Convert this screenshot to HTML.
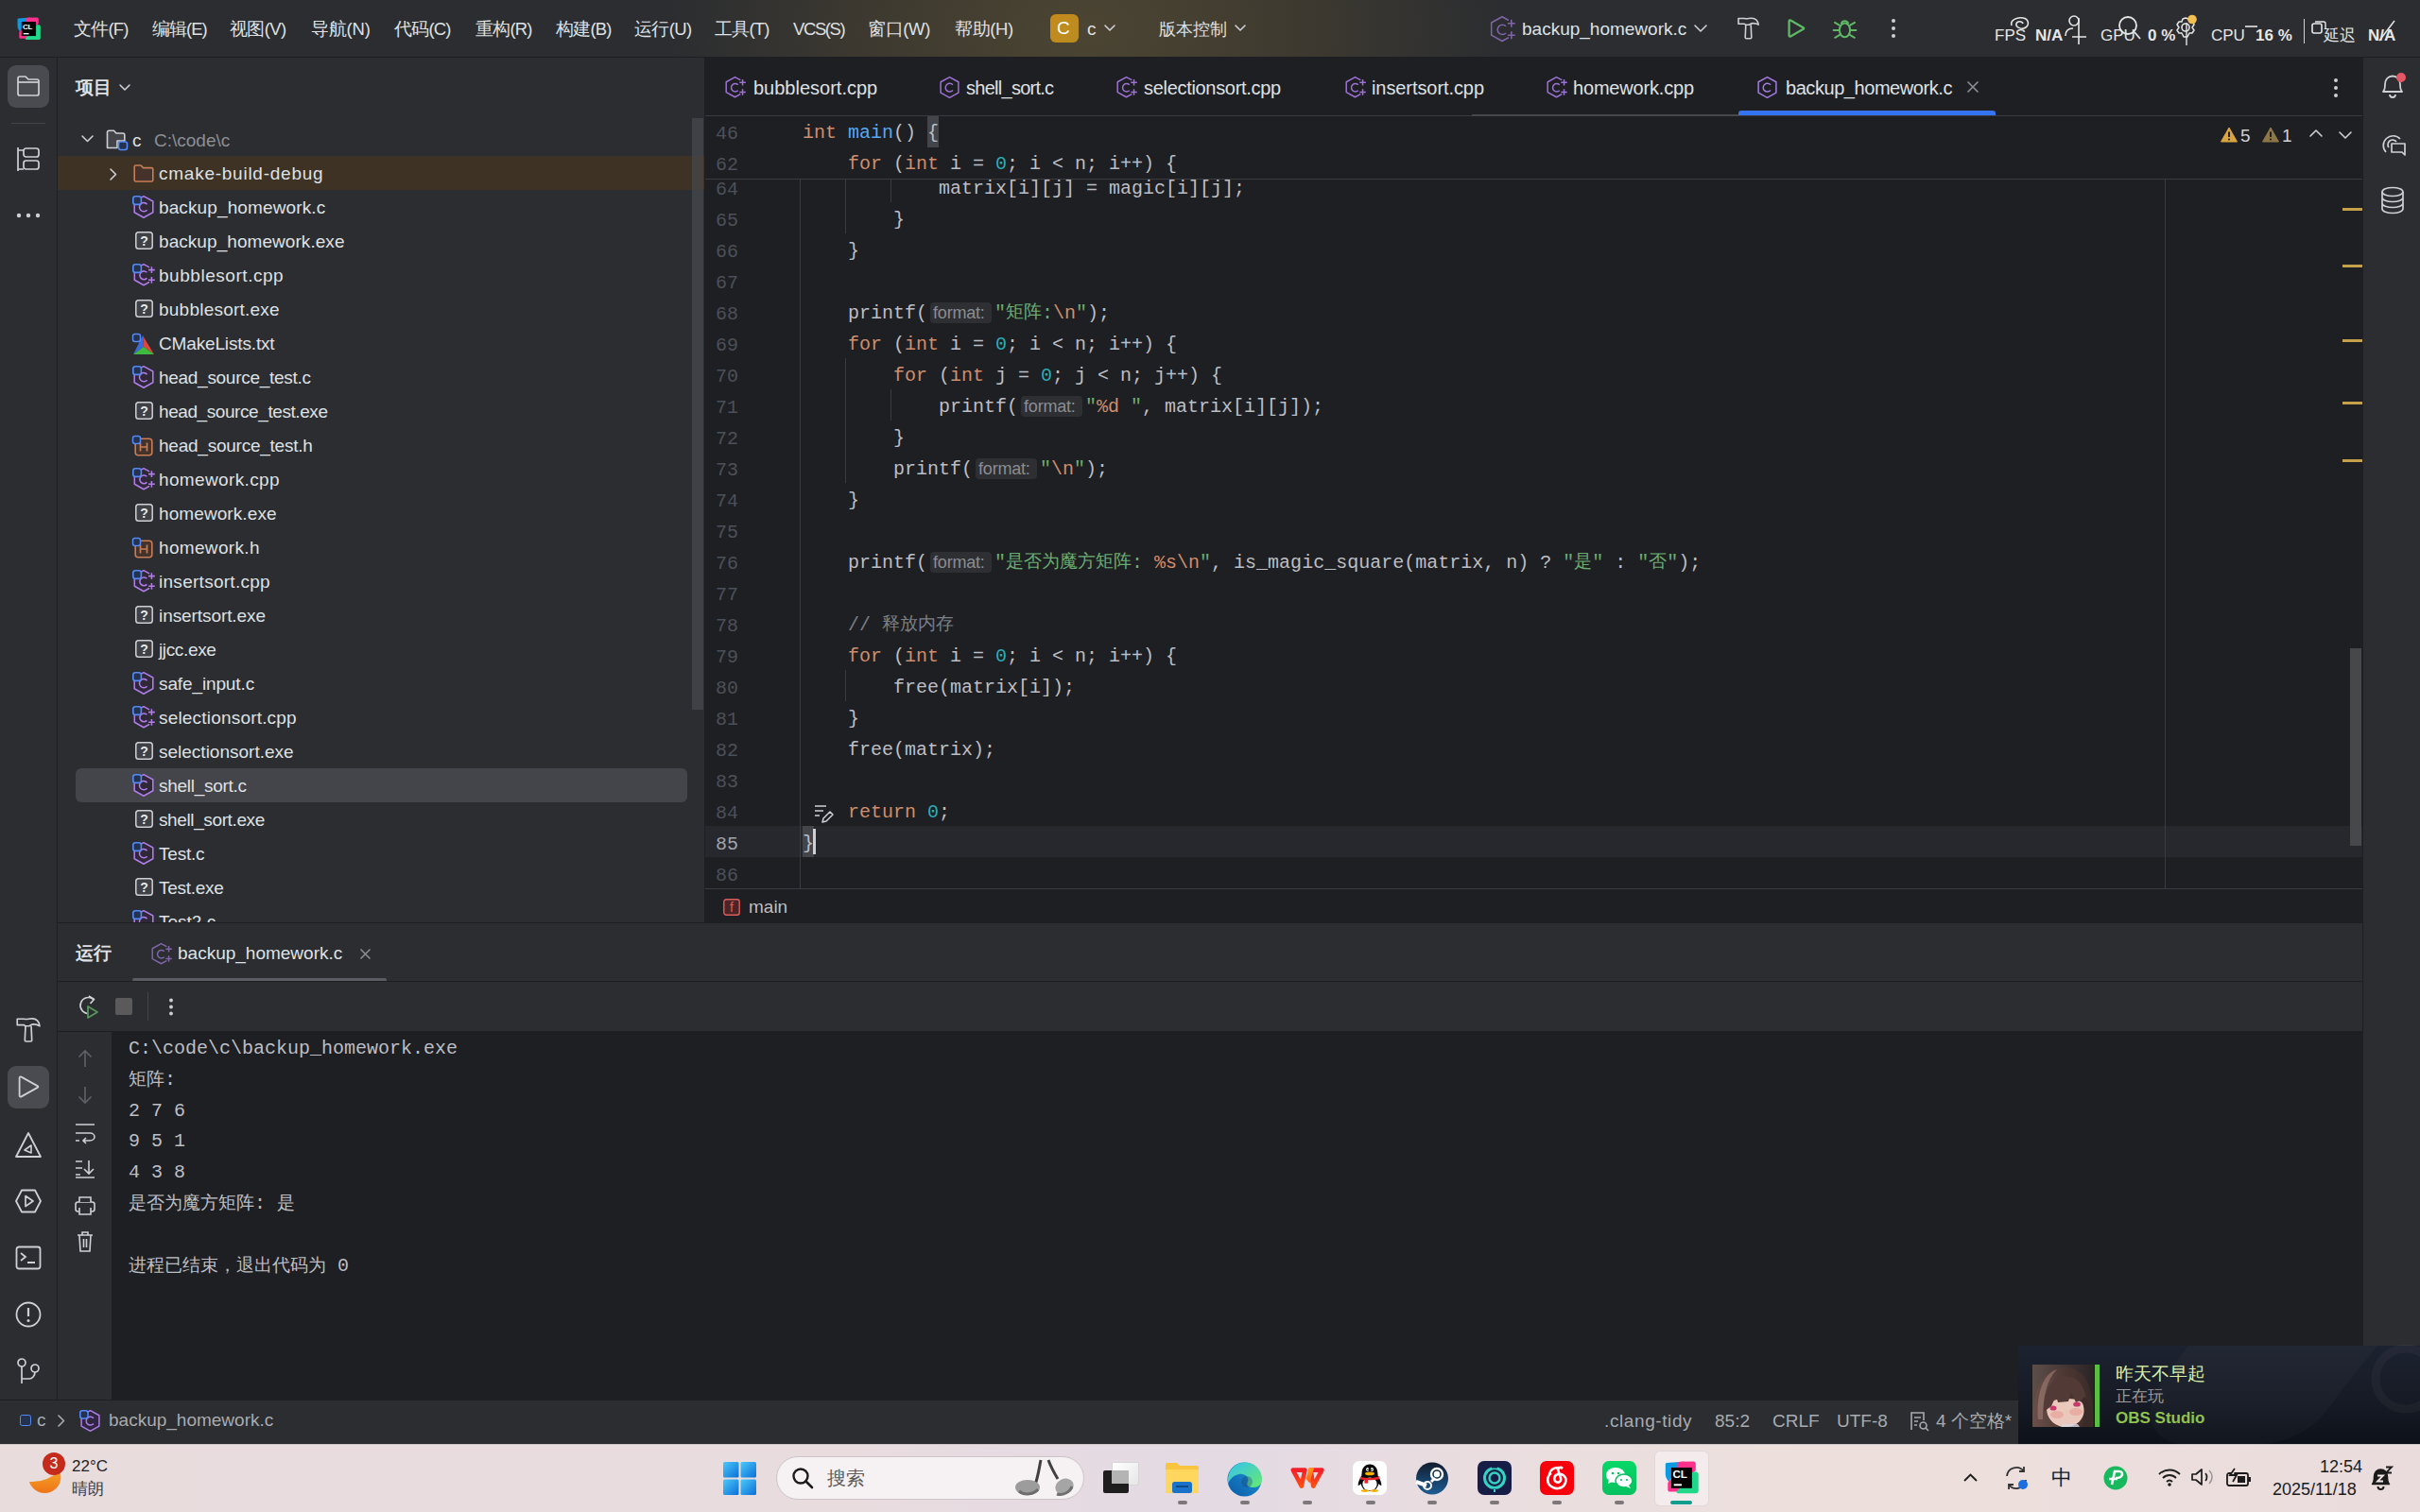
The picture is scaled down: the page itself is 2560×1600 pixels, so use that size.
<!DOCTYPE html><html><head><meta charset="utf-8"><style>
html,body{margin:0;padding:0;}
body{width:2560px;height:1600px;position:relative;overflow:hidden;background:#2B2D30;font-family:"Liberation Sans",sans-serif;}
.t{position:absolute;white-space:pre;height:40px;line-height:40px;}
svg{overflow:visible}
</style></head><body>
<div style="position:absolute;left:0px;top:0px;width:2560px;height:60px;background:radial-gradient(ellipse 440px 300px at 1150px 30px, #4C4533 0%, #403B30 45%, rgba(43,45,48,0) 100%),#2B2D30;"></div>
<div style="position:absolute;left:0px;top:60px;width:2560px;height:1px;background:#1E1F22;"></div>
<svg style="position:absolute;left:17.5px;top:17.5px;" width="25" height="24.5" viewBox="-2 0 36 35" fill="none"><defs><linearGradient id="clb17" x1="0" y1="0" x2="1" y2="0"><stop offset=".55" stop-color="#0A9AE3"/><stop offset=".75" stop-color="#FF318C"/></linearGradient></defs><path d="M-1.2 3.4 C-1.2 2.6 -0.6 2.2 0.2 2.1 L19 0.6 L2.2 21.8 C0.5 19.5 -1.2 17 -1.2 14 Z" fill="url(#clb17)"/><path d="M14 0.8 L28.2 0.6 C29.8 0.6 30.8 1.6 30.8 3.2 V9.7 L27.4 13.5 L10 10 Z" fill="#FF318C"/><path d="M27.8 11.6 H31.2 C32.6 11.6 33.7 12.8 33.7 14.2 V31.8 C33.7 33.2 32.6 34.3 31.2 34.3 H12.4 C11 34.3 10.2 33.2 10.6 32 L14 27 Z" fill="#21D789"/><path d="M2.2 21.6 L8 16 L14 28.8 L10.4 32.6 H3.6 C2.2 32.6 1.3 31.7 1.3 30.3 V23.5 Z" fill="#FF318C"/><rect x="4.9" y="7" width="22" height="21.8" fill="#000"/><text x="6.6" y="18.3" font-family="Liberation Sans" font-weight="700" font-size="11.6" fill="#fff" letter-spacing="-0.3">CL</text><rect x="7.7" y="24.3" width="8.3" height="2" fill="#fff"/></svg>
<div class="t" style="left:78px;top:11px;font-family:&quot;Liberation Sans&quot;, sans-serif;font-size:18.5px;color:#DFE1E5;font-weight:400;letter-spacing:-0.8px;">文件(F)</div>
<div class="t" style="left:161px;top:11px;font-family:&quot;Liberation Sans&quot;, sans-serif;font-size:18.5px;color:#DFE1E5;font-weight:400;letter-spacing:-1.0px;">编辑(E)</div>
<div class="t" style="left:243px;top:11px;font-family:&quot;Liberation Sans&quot;, sans-serif;font-size:18.5px;color:#DFE1E5;font-weight:400;letter-spacing:-0.6px;">视图(V)</div>
<div class="t" style="left:329px;top:11px;font-family:&quot;Liberation Sans&quot;, sans-serif;font-size:18.5px;color:#DFE1E5;font-weight:400;letter-spacing:-0.2px;">导航(N)</div>
<div class="t" style="left:417px;top:11px;font-family:&quot;Liberation Sans&quot;, sans-serif;font-size:18.5px;color:#DFE1E5;font-weight:400;letter-spacing:-0.8px;">代码(C)</div>
<div class="t" style="left:503px;top:11px;font-family:&quot;Liberation Sans&quot;, sans-serif;font-size:18.5px;color:#DFE1E5;font-weight:400;letter-spacing:-0.8px;">重构(R)</div>
<div class="t" style="left:588px;top:11px;font-family:&quot;Liberation Sans&quot;, sans-serif;font-size:18.5px;color:#DFE1E5;font-weight:400;letter-spacing:-0.8px;">构建(B)</div>
<div class="t" style="left:671px;top:11px;font-family:&quot;Liberation Sans&quot;, sans-serif;font-size:18.5px;color:#DFE1E5;font-weight:400;letter-spacing:-0.6px;">运行(U)</div>
<div class="t" style="left:756px;top:11px;font-family:&quot;Liberation Sans&quot;, sans-serif;font-size:18.5px;color:#DFE1E5;font-weight:400;letter-spacing:-0.8px;">工具(T)</div>
<div class="t" style="left:839px;top:11px;font-family:&quot;Liberation Sans&quot;, sans-serif;font-size:18.5px;color:#DFE1E5;font-weight:400;letter-spacing:-1.4px;">VCS(S)</div>
<div class="t" style="left:918px;top:11px;font-family:&quot;Liberation Sans&quot;, sans-serif;font-size:18.5px;color:#DFE1E5;font-weight:400;letter-spacing:-0.35px;">窗口(W)</div>
<div class="t" style="left:1010px;top:11px;font-family:&quot;Liberation Sans&quot;, sans-serif;font-size:18.5px;color:#DFE1E5;font-weight:400;letter-spacing:-0.4px;">帮助(H)</div>
<div style="position:absolute;left:1111px;top:15px;width:30px;height:30px;background:linear-gradient(135deg,#C58A1A,#B98C22);border-radius:6px;"></div>
<div class="t" style="left:1118px;top:10px;font-family:&quot;Liberation Sans&quot;, sans-serif;font-size:19px;color:#FFFFFF;font-weight:400;">C</div>
<div class="t" style="left:1150px;top:11px;font-family:&quot;Liberation Sans&quot;, sans-serif;font-size:19px;color:#DFE1E5;font-weight:400;">c</div>
<svg style="position:absolute;left:1168px;top:26px;" width="12" height="8" viewBox="0 0 12 8" fill="none"><path d="M1 1 L6.0 6.0 L11 1" stroke="#CED0D6" stroke-width="1.6" stroke-linecap="round" stroke-linejoin="round"/></svg>
<div class="t" style="left:1226px;top:11px;font-family:&quot;Liberation Sans&quot;, sans-serif;font-size:18px;color:#DFE1E5;font-weight:400;">版本控制</div>
<svg style="position:absolute;left:1306px;top:26px;" width="12" height="8" viewBox="0 0 12 8" fill="none"><path d="M1 1 L6.0 6.0 L11 1" stroke="#CED0D6" stroke-width="1.6" stroke-linecap="round" stroke-linejoin="round"/></svg>
<svg style="position:absolute;left:1575px;top:17px;" width="28" height="28" viewBox="0 0 24 24" fill="none"><path d="M17.5 3.6 L12 0.6 L2.3 6 L2.3 17.3 L12 22.7 L17.5 19.7 Z" fill="none" stroke="none"/><path d="M17.5 3.6 L12 0.6 L2.3 6 L2.3 17.3 L12 22.7 L17.5 19.7" stroke="#7F65A8" stroke-width="1.3285714285714287" fill="none" stroke-linejoin="round" stroke-linecap="round"/><path d="M15.4 9.2 A4.4 4.4 0 1 0 15.4 15.4" stroke="#7F65A8" stroke-width="1.3285714285714287"/><path d="M20.4 3.2 V10 M17 6.6 H23.8 M20.4 13.9 V20.7 M17 17.3 H23.8" stroke="#7F65A8" stroke-width="1.3285714285714287"/></svg>
<div class="t" style="left:1610px;top:11px;font-family:&quot;Liberation Sans&quot;, sans-serif;font-size:19px;color:#DFE1E5;font-weight:400;">backup_homework.c</div>
<svg style="position:absolute;left:1792px;top:26px;" width="14" height="9" viewBox="0 0 14 9" fill="none"><path d="M1 1 L7.0 7.0 L13 1" stroke="#CED0D6" stroke-width="1.6" stroke-linecap="round" stroke-linejoin="round"/></svg>
<svg style="position:absolute;left:1837px;top:18px;" width="25" height="24" viewBox="0 0 25 24" fill="none"><path d="M2 1.5 H8.5 C11 2.2 13 1.2 16 1.2 C20 1.2 22.6 4 23.2 8.2 C21.5 7 19.5 6.6 17.5 6.6 C15.5 6.6 14.5 7.6 13.4 8.2 H9.6 C9 7.6 8.6 7.2 8 7.2 H2 Z" stroke="#CED0D6" stroke-width="1.6" stroke-linejoin="round"/><path d="M9.8 8.2 L9.2 21.6 C9.2 22.3 9.6 22.7 10.3 22.7 H14.7 C15.4 22.7 15.8 22.3 15.8 21.6 L15.2 8.2" stroke="#CED0D6" stroke-width="1.6" stroke-linejoin="round"/></svg>
<svg style="position:absolute;left:1889px;top:18px;" width="24" height="24" viewBox="0 0 24 24" fill="none"><path d="M5.2 3.6 C4.4 3.1 3.6 3.6 3.6 4.5 V19.5 C3.6 20.4 4.4 20.9 5.2 20.4 L18.6 12.8 C19.4 12.3 19.4 11.7 18.6 11.2 Z" stroke="#5FB865" stroke-width="2.3" stroke-linejoin="round"/></svg>
<svg style="position:absolute;left:1937px;top:17px;" width="26" height="26" viewBox="0 0 26 26" fill="none"><ellipse cx="14.5" cy="14.8" rx="5.6" ry="7.4" stroke="#5FB865" stroke-width="2"/><path d="M10.8 8.2 A3.8 3.8 0 0 1 18.2 8.2" stroke="#5FB865" stroke-width="2"/><path d="M8.8 9.6 L4 6.8 M8.8 15 H2.6 M9.2 19.8 L4.2 22.8 M20.2 9.6 L25 6.8 M20.2 15 H26.4 M19.8 19.8 L24.8 22.8" stroke="#5FB865" stroke-width="2" stroke-linecap="round"/></svg>
<svg style="position:absolute;left:1998px;top:19px;" width="10" height="24" viewBox="0 0 10 24" fill="none"><circle cx="5" cy="3" r="2" fill="#CED0D6"/><circle cx="5" cy="11" r="2" fill="#CED0D6"/><circle cx="5" cy="19" r="2" fill="#CED0D6"/></svg>
<div class="t" style="left:2110px;top:18px;font-family:&quot;Liberation Sans&quot;, sans-serif;font-size:17px;color:#E6E6E6;font-weight:400;">FPS</div>
<svg style="position:absolute;left:2124px;top:17px;" width="24" height="22" viewBox="0 0 24 22" fill="none"><path d="M4 10 C2 4 10 1 16 2 C22 3 23 9 19 12 C15 15 8 12 9 8 C10 5 15 5 16 8" stroke="#E6E6E6" stroke-width="1.6"/></svg>
<div class="t" style="left:2153px;top:18px;font-family:&quot;Liberation Sans&quot;, sans-serif;font-size:17px;color:#E6E6E6;font-weight:700;">N/A</div>
<svg style="position:absolute;left:2183px;top:16px;" width="26" height="32" viewBox="0 0 26 32" fill="none"><circle cx="11" cy="6" r="5" stroke="#E6E6E6" stroke-width="1.6"/><path d="M2 22 C2 16 6 14 10 14" stroke="#E6E6E6" stroke-width="1.6"/><path d="M16 3 V31 M9 23 H24" stroke="#E6E6E6" stroke-width="1.6"/></svg>
<div class="t" style="left:2222px;top:18px;font-family:&quot;Liberation Sans&quot;, sans-serif;font-size:17px;color:#E6E6E6;font-weight:400;">GPU</div>
<svg style="position:absolute;left:2240px;top:17px;" width="26" height="28" viewBox="0 0 26 28" fill="none"><circle cx="11" cy="10" r="9" stroke="#E6E6E6" stroke-width="1.8"/><path d="M18 17 L24 24" stroke="#E6E6E6" stroke-width="1.8"/></svg>
<div class="t" style="left:2272px;top:18px;font-family:&quot;Liberation Sans&quot;, sans-serif;font-size:17px;color:#E6E6E6;font-weight:700;">0 %</div>
<svg style="position:absolute;left:2300px;top:16px;" width="26" height="32" viewBox="0 0 26 32" fill="none"><circle cx="12" cy="13" r="4" stroke="#E6E6E6" stroke-width="1.6"/><path d="M12 3 L15 4 L16 7 L20 7 L21 10 L19 13 L21 16 L19 19 L16 19 L14 23 L10 23 L8 19 L5 19 L3 16 L5 13 L3 10 L5 7 L8 7 L9 4 Z" stroke="#E6E6E6" stroke-width="1.5" stroke-linejoin="round"/><path d="M13 8 V32" stroke="#E6E6E6" stroke-width="1.4"/><circle cx="19" cy="4.5" r="4.8" fill="#F3C04F"/></svg>
<div class="t" style="left:2339px;top:18px;font-family:&quot;Liberation Sans&quot;, sans-serif;font-size:17px;color:#E6E6E6;font-weight:400;">CPU</div>
<svg style="position:absolute;left:2374px;top:27px;" width="16" height="4" viewBox="0 0 16 4" fill="none"><path d="M1 1 H14" stroke="#E6E6E6" stroke-width="1.6"/></svg>
<div class="t" style="left:2386px;top:18px;font-family:&quot;Liberation Sans&quot;, sans-serif;font-size:17px;color:#E6E6E6;font-weight:700;">16 %</div>
<div style="position:absolute;left:2437px;top:20px;width:1px;height:26px;background:#D0D0D0;"></div>
<svg style="position:absolute;left:2445px;top:22px;" width="17" height="16" viewBox="0 0 17 16" fill="none"><rect x="1" y="3" width="10" height="10" rx="2" stroke="#E6E6E6" stroke-width="1.6"/><path d="M4 1 H13 C14 1 15 2 15 3 V9" stroke="#E6E6E6" stroke-width="1.4"/></svg>
<div class="t" style="left:2458px;top:18px;font-family:&quot;Liberation Sans&quot;, sans-serif;font-size:17px;color:#E6E6E6;font-weight:400;">延迟</div>
<div class="t" style="left:2505px;top:18px;font-family:&quot;Liberation Sans&quot;, sans-serif;font-size:17px;color:#E6E6E6;font-weight:700;">N/A</div>
<svg style="position:absolute;left:2516px;top:21px;" width="18" height="24" viewBox="0 0 18 24" fill="none"><path d="M1 22 L17 1" stroke="#E6E6E6" stroke-width="1.5"/></svg>
<div style="position:absolute;left:0px;top:61px;width:60px;height:1420px;background:#2B2D30;"></div>
<div style="position:absolute;left:60px;top:61px;width:1px;height:1420px;background:#1E1F22;"></div>
<div style="position:absolute;left:8px;top:69px;width:44px;height:45px;background:#494B50;border-radius:9px;"></div>
<svg style="position:absolute;left:17px;top:79px;" width="26" height="24" viewBox="0 0 26 24" fill="none"><path d="M2 4 C2 3 3 2 4 2 H10 L13 5 H22 C23 5 24 6 24 7 V20 C24 21 23 22 22 22 H4 C3 22 2 21 2 20 Z" stroke="#CED0D6" stroke-width="1.7" stroke-linejoin="round"/><path d="M2 8 H24" stroke="#CED0D6" stroke-width="1.7"/></svg>
<div style="position:absolute;left:12px;top:130px;width:36px;height:1px;background:#43454A;"></div>
<svg style="position:absolute;left:17px;top:154px;" width="26" height="29" viewBox="0 0 26 29" fill="none"><path d="M2 2 V27 M2 5 H8 M2 25 H8" stroke="#CED0D6" stroke-width="1.7"/><rect x="8" y="3" width="16" height="9" rx="2.5" stroke="#CED0D6" stroke-width="1.7"/><rect x="8" y="16" width="16" height="9" rx="2.5" stroke="#CED0D6" stroke-width="1.7"/></svg>
<svg style="position:absolute;left:17px;top:224px;" width="26" height="8" viewBox="0 0 26 8" fill="none"><circle cx="3" cy="4" r="2.2" fill="#CED0D6"/><circle cx="13" cy="4" r="2.2" fill="#CED0D6"/><circle cx="23" cy="4" r="2.2" fill="#CED0D6"/></svg>
<svg style="position:absolute;left:16px;top:1076px;" width="28" height="28" viewBox="0 0 25 24" fill="none"><path d="M2 1.5 H8.5 C11 2.2 13 1.2 16 1.2 C20 1.2 22.6 4 23.2 8.2 C21.5 7 19.5 6.6 17.5 6.6 C15.5 6.6 14.5 7.6 13.4 8.2 H9.6 C9 7.6 8.6 7.2 8 7.2 H2 Z" stroke="#CED0D6" stroke-width="1.5" stroke-linejoin="round"/><path d="M9.8 8.2 L9.2 21.6 C9.2 22.3 9.6 22.7 10.3 22.7 H14.7 C15.4 22.7 15.8 22.3 15.8 21.6 L15.2 8.2" stroke="#CED0D6" stroke-width="1.5" stroke-linejoin="round"/></svg>
<div style="position:absolute;left:8px;top:1128px;width:44px;height:45px;background:#494B50;border-radius:9px;"></div>
<svg style="position:absolute;left:18px;top:1137px;" width="24" height="26" viewBox="0 0 24 26" fill="none"><path d="M4.6 2.6 C3.6 2 2.6 2.6 2.6 3.8 V22.2 C2.6 23.4 3.6 24 4.6 23.4 L21.6 13.9 C22.6 13.3 22.6 12.7 21.6 12.1 Z" stroke="#CED0D6" stroke-width="1.8" stroke-linejoin="round"/></svg>
<svg style="position:absolute;left:16px;top:1197px;" width="28" height="29" viewBox="0 0 28 29" fill="none"><path d="M14 2 L27 27 H1 Z" stroke="#CED0D6" stroke-width="1.8" stroke-linejoin="round"/><path d="M17 15 L10 20 L17 23 Z" stroke="#CED0D6" stroke-width="1.6" stroke-linejoin="round"/></svg>
<svg style="position:absolute;left:16px;top:1258px;" width="28" height="26" viewBox="0 0 28 26" fill="none"><path d="M7 1.5 H21 L27 13 L21 24.5 H7 L1 13 Z" stroke="#CED0D6" stroke-width="1.8" stroke-linejoin="round"/><path d="M11 7.5 L19 13 L11 18.5 Z" stroke="#CED0D6" stroke-width="1.7" stroke-linejoin="round"/></svg>
<svg style="position:absolute;left:16px;top:1318px;" width="28" height="26" viewBox="0 0 28 26" fill="none"><rect x="1.5" y="1.5" width="25" height="23" rx="2.5" stroke="#CED0D6" stroke-width="1.8"/><path d="M6 8 L11 12 L6 16 M13 18 H21" stroke="#CED0D6" stroke-width="1.8"/></svg>
<svg style="position:absolute;left:16px;top:1377px;" width="28" height="28" viewBox="0 0 28 28" fill="none"><circle cx="14" cy="14" r="12.5" stroke="#CED0D6" stroke-width="1.8"/><path d="M14 7 V16" stroke="#CED0D6" stroke-width="2.2"/><circle cx="14" cy="20.5" r="1.5" fill="#CED0D6"/></svg>
<svg style="position:absolute;left:17px;top:1437px;" width="26" height="28" viewBox="0 0 26 28" fill="none"><circle cx="6" cy="5" r="4" stroke="#CED0D6" stroke-width="1.7"/><circle cx="20" cy="11" r="4" stroke="#CED0D6" stroke-width="1.7"/><path d="M6 9 V27 M6 22 H14 C17 22 20 19 20 15" stroke="#CED0D6" stroke-width="1.7"/></svg>
<div style="position:absolute;left:61px;top:61px;width:684px;height:915px;background:#2B2D30;"></div>
<div class="t" style="left:80px;top:73px;font-family:&quot;Liberation Sans&quot;, sans-serif;font-size:19px;color:#DFE1E5;font-weight:700;">项目</div>
<svg style="position:absolute;left:126px;top:89px;" width="12" height="8" viewBox="0 0 12 8" fill="none"><path d="M1 1 L6.0 6.0 L11 1" stroke="#CED0D6" stroke-width="1.6" stroke-linecap="round" stroke-linejoin="round"/></svg>
<div style="position:absolute;left:61px;top:61px;width:684px;height:915px;overflow:hidden;">
<svg style="position:absolute;left:25px;top:82px;" width="13" height="8" viewBox="0 0 13 8" fill="none"><path d="M1 1 L6.5 6.5 L12 1" stroke="#CED0D6" stroke-width="1.6" stroke-linecap="round" stroke-linejoin="round"/></svg>
<svg style="position:absolute;left:51px;top:76px;" width="24" height="22" viewBox="0 0 24 22" fill="none"><path d="M1.5 3 C1.5 2 2.3 1.3 3.2 1.3 H8.5 L11 4 H18 C19 4 19.8 4.8 19.8 5.8 V12 H12 V19.5 H1.5 Z" fill="#43454A" stroke="#CED0D6" stroke-width="1.6" stroke-linejoin="round"/><rect x="13.5" y="13" width="9" height="8.5" rx="2.2" fill="#25324D" stroke="#548AF7" stroke-width="1.6"/></svg>
<div class="t" style="left:79px;top:68px;font-family:&quot;Liberation Sans&quot;, sans-serif;font-size:19px;color:#DFE1E5;font-weight:400;">c</div>
<div class="t" style="left:102px;top:68px;font-family:&quot;Liberation Sans&quot;, sans-serif;font-size:19px;color:#8C8F94;font-weight:400;">C:\code\c</div>
<div style="position:absolute;left:0px;top:104px;width:684px;height:36px;background:#3D3223;"></div>
<svg style="position:absolute;left:55px;top:117px;" width="8" height="13" viewBox="0 0 8 13" fill="none"><path d="M1 1 L6.5 6.5 L1 12" stroke="#CED0D6" stroke-width="1.6" stroke-linecap="round" stroke-linejoin="round"/></svg>
<svg style="position:absolute;left:80px;top:113px;" width="22" height="19" viewBox="0 0 22 19" fill="none"><path d="M1.2 2.5 C1.2 1.7 1.9 1 2.7 1 H8 L10.5 3.6 H19.3 C20.1 3.6 20.8 4.3 20.8 5.1 V16.5 C20.8 17.3 20.1 18 19.3 18 H2.7 C1.9 18 1.2 17.3 1.2 16.5 Z" fill="#45322A" stroke="#C77D55" stroke-width="1.6" stroke-linejoin="round"/></svg>
<div class="t" style="left:107px;top:103px;font-family:&quot;Liberation Sans&quot;, sans-serif;font-size:19px;color:#DFE1E5;font-weight:400;letter-spacing:0.75px;">cmake-build-debug</div>
<svg style="position:absolute;left:79px;top:146px;" width="24" height="24" viewBox="0 0 24 24" fill="none"><path d="M12 0.6 L21.8 6 L21.8 17.8 L12 23.3 L2.2 17.8 L2.2 6 Z" stroke="#B07CE8" stroke-width="1.55" fill="#2E2838" stroke-linejoin="round"/><path d="M15.6 9.2 A4.6 4.6 0 1 0 15.6 15.2" stroke="#B07CE8" stroke-width="1.55"/><rect x="0.8" y="0.8" width="8.6" height="8.6" rx="2.5" fill="#25324D" stroke="#548AF7" stroke-width="1.6"/></svg>
<div class="t" style="left:107px;top:139px;font-family:&quot;Liberation Sans&quot;, sans-serif;font-size:19px;color:#DFE1E5;font-weight:400;letter-spacing:0.12px;">backup_homework.c</div>
<svg style="position:absolute;left:82px;top:184px;" width="19" height="19" viewBox="0 0 19 19" fill="none"><rect x="0.8" y="0.8" width="17.4" height="17.4" rx="2.8" fill="#3F4145" stroke="#CED0D6" stroke-width="1.5"/><text x="9.5" y="14.6" text-anchor="middle" font-family="Liberation Sans" font-weight="700" font-size="14" fill="#E6E7EA">?</text></svg>
<div class="t" style="left:107px;top:175px;font-family:&quot;Liberation Sans&quot;, sans-serif;font-size:19px;color:#DFE1E5;font-weight:400;letter-spacing:0.06px;">backup_homework.exe</div>
<svg style="position:absolute;left:79px;top:218px;" width="24" height="24" viewBox="0 0 24 24" fill="none"><path d="M17.5 3.6 L12 0.6 L2.3 6 L2.3 17.3 L12 22.7 L17.5 19.7 Z" fill="#2E2838" stroke="none"/><path d="M17.5 3.6 L12 0.6 L2.3 6 L2.3 17.3 L12 22.7 L17.5 19.7" stroke="#B07CE8" stroke-width="1.55" fill="none" stroke-linejoin="round" stroke-linecap="round"/><path d="M15.4 9.2 A4.4 4.4 0 1 0 15.4 15.4" stroke="#B07CE8" stroke-width="1.55"/><path d="M20.4 3.2 V10 M17 6.6 H23.8 M20.4 13.9 V20.7 M17 17.3 H23.8" stroke="#B07CE8" stroke-width="1.55"/><rect x="0.8" y="0.8" width="8.6" height="8.6" rx="2.5" fill="#25324D" stroke="#548AF7" stroke-width="1.6"/></svg>
<div class="t" style="left:107px;top:211px;font-family:&quot;Liberation Sans&quot;, sans-serif;font-size:19px;color:#DFE1E5;font-weight:400;letter-spacing:0.54px;">bubblesort.cpp</div>
<svg style="position:absolute;left:82px;top:256px;" width="19" height="19" viewBox="0 0 19 19" fill="none"><rect x="0.8" y="0.8" width="17.4" height="17.4" rx="2.8" fill="#3F4145" stroke="#CED0D6" stroke-width="1.5"/><text x="9.5" y="14.6" text-anchor="middle" font-family="Liberation Sans" font-weight="700" font-size="14" fill="#E6E7EA">?</text></svg>
<div class="t" style="left:107px;top:247px;font-family:&quot;Liberation Sans&quot;, sans-serif;font-size:19px;color:#DFE1E5;font-weight:400;letter-spacing:0.23px;">bubblesort.exe</div>
<svg style="position:absolute;left:79px;top:292px;" width="24" height="24" viewBox="0 0 24 24" fill="none"><path d="M11 2 L1 22 L12 14 Z" fill="#3B6BD9"/><path d="M11 2 L23 22 L12 14 Z" fill="#E0443A"/><path d="M1 22 H23 L12 14 Z" fill="#3FB93F"/><rect x="0.5" y="0.5" width="8" height="8" rx="2.2" fill="#25324D" stroke="#548AF7" stroke-width="1.5"/></svg>
<div class="t" style="left:107px;top:283px;font-family:&quot;Liberation Sans&quot;, sans-serif;font-size:19px;color:#DFE1E5;font-weight:400;letter-spacing:-0.15px;">CMakeLists.txt</div>
<svg style="position:absolute;left:79px;top:326px;" width="24" height="24" viewBox="0 0 24 24" fill="none"><path d="M12 0.6 L21.8 6 L21.8 17.8 L12 23.3 L2.2 17.8 L2.2 6 Z" stroke="#B07CE8" stroke-width="1.55" fill="#2E2838" stroke-linejoin="round"/><path d="M15.6 9.2 A4.6 4.6 0 1 0 15.6 15.2" stroke="#B07CE8" stroke-width="1.55"/><rect x="0.8" y="0.8" width="8.6" height="8.6" rx="2.5" fill="#25324D" stroke="#548AF7" stroke-width="1.6"/></svg>
<div class="t" style="left:107px;top:319px;font-family:&quot;Liberation Sans&quot;, sans-serif;font-size:19px;color:#DFE1E5;font-weight:400;letter-spacing:-0.29px;">head_source_test.c</div>
<svg style="position:absolute;left:82px;top:364px;" width="19" height="19" viewBox="0 0 19 19" fill="none"><rect x="0.8" y="0.8" width="17.4" height="17.4" rx="2.8" fill="#3F4145" stroke="#CED0D6" stroke-width="1.5"/><text x="9.5" y="14.6" text-anchor="middle" font-family="Liberation Sans" font-weight="700" font-size="14" fill="#E6E7EA">?</text></svg>
<div class="t" style="left:107px;top:355px;font-family:&quot;Liberation Sans&quot;, sans-serif;font-size:19px;color:#DFE1E5;font-weight:400;letter-spacing:-0.42px;">head_source_test.exe</div>
<svg style="position:absolute;left:79px;top:400px;" width="22" height="22" viewBox="0 0 22 22" fill="none"><rect x="3.2" y="3.2" width="17.6" height="17.6" rx="3" fill="#45322A" stroke="#C77D55" stroke-width="1.6"/><path d="M8.5 7.5 V16.5 M15.5 7.5 V16.5 M8.5 12 H15.5" stroke="#C77D55" stroke-width="1.7"/><rect x="0.5" y="0.5" width="8" height="8" rx="2.2" fill="#25324D" stroke="#548AF7" stroke-width="1.5"/></svg>
<div class="t" style="left:107px;top:391px;font-family:&quot;Liberation Sans&quot;, sans-serif;font-size:19px;color:#DFE1E5;font-weight:400;letter-spacing:-0.24px;">head_source_test.h</div>
<svg style="position:absolute;left:79px;top:434px;" width="24" height="24" viewBox="0 0 24 24" fill="none"><path d="M17.5 3.6 L12 0.6 L2.3 6 L2.3 17.3 L12 22.7 L17.5 19.7 Z" fill="#2E2838" stroke="none"/><path d="M17.5 3.6 L12 0.6 L2.3 6 L2.3 17.3 L12 22.7 L17.5 19.7" stroke="#B07CE8" stroke-width="1.55" fill="none" stroke-linejoin="round" stroke-linecap="round"/><path d="M15.4 9.2 A4.4 4.4 0 1 0 15.4 15.4" stroke="#B07CE8" stroke-width="1.55"/><path d="M20.4 3.2 V10 M17 6.6 H23.8 M20.4 13.9 V20.7 M17 17.3 H23.8" stroke="#B07CE8" stroke-width="1.55"/><rect x="0.8" y="0.8" width="8.6" height="8.6" rx="2.5" fill="#25324D" stroke="#548AF7" stroke-width="1.6"/></svg>
<div class="t" style="left:107px;top:427px;font-family:&quot;Liberation Sans&quot;, sans-serif;font-size:19px;color:#DFE1E5;font-weight:400;letter-spacing:0.36px;">homework.cpp</div>
<svg style="position:absolute;left:82px;top:472px;" width="19" height="19" viewBox="0 0 19 19" fill="none"><rect x="0.8" y="0.8" width="17.4" height="17.4" rx="2.8" fill="#3F4145" stroke="#CED0D6" stroke-width="1.5"/><text x="9.5" y="14.6" text-anchor="middle" font-family="Liberation Sans" font-weight="700" font-size="14" fill="#E6E7EA">?</text></svg>
<div class="t" style="left:107px;top:463px;font-family:&quot;Liberation Sans&quot;, sans-serif;font-size:19px;color:#DFE1E5;font-weight:400;letter-spacing:0.09px;">homework.exe</div>
<svg style="position:absolute;left:79px;top:508px;" width="22" height="22" viewBox="0 0 22 22" fill="none"><rect x="3.2" y="3.2" width="17.6" height="17.6" rx="3" fill="#45322A" stroke="#C77D55" stroke-width="1.6"/><path d="M8.5 7.5 V16.5 M15.5 7.5 V16.5 M8.5 12 H15.5" stroke="#C77D55" stroke-width="1.7"/><rect x="0.5" y="0.5" width="8" height="8" rx="2.2" fill="#25324D" stroke="#548AF7" stroke-width="1.5"/></svg>
<div class="t" style="left:107px;top:499px;font-family:&quot;Liberation Sans&quot;, sans-serif;font-size:19px;color:#DFE1E5;font-weight:400;letter-spacing:0.33px;">homework.h</div>
<svg style="position:absolute;left:79px;top:542px;" width="24" height="24" viewBox="0 0 24 24" fill="none"><path d="M17.5 3.6 L12 0.6 L2.3 6 L2.3 17.3 L12 22.7 L17.5 19.7 Z" fill="#2E2838" stroke="none"/><path d="M17.5 3.6 L12 0.6 L2.3 6 L2.3 17.3 L12 22.7 L17.5 19.7" stroke="#B07CE8" stroke-width="1.55" fill="none" stroke-linejoin="round" stroke-linecap="round"/><path d="M15.4 9.2 A4.4 4.4 0 1 0 15.4 15.4" stroke="#B07CE8" stroke-width="1.55"/><path d="M20.4 3.2 V10 M17 6.6 H23.8 M20.4 13.9 V20.7 M17 17.3 H23.8" stroke="#B07CE8" stroke-width="1.55"/><rect x="0.8" y="0.8" width="8.6" height="8.6" rx="2.5" fill="#25324D" stroke="#548AF7" stroke-width="1.6"/></svg>
<div class="t" style="left:107px;top:535px;font-family:&quot;Liberation Sans&quot;, sans-serif;font-size:19px;color:#DFE1E5;font-weight:400;letter-spacing:0.28px;">insertsort.cpp</div>
<svg style="position:absolute;left:82px;top:580px;" width="19" height="19" viewBox="0 0 19 19" fill="none"><rect x="0.8" y="0.8" width="17.4" height="17.4" rx="2.8" fill="#3F4145" stroke="#CED0D6" stroke-width="1.5"/><text x="9.5" y="14.6" text-anchor="middle" font-family="Liberation Sans" font-weight="700" font-size="14" fill="#E6E7EA">?</text></svg>
<div class="t" style="left:107px;top:571px;font-family:&quot;Liberation Sans&quot;, sans-serif;font-size:19px;color:#DFE1E5;font-weight:400;letter-spacing:-0.08px;">insertsort.exe</div>
<svg style="position:absolute;left:82px;top:616px;" width="19" height="19" viewBox="0 0 19 19" fill="none"><rect x="0.8" y="0.8" width="17.4" height="17.4" rx="2.8" fill="#3F4145" stroke="#CED0D6" stroke-width="1.5"/><text x="9.5" y="14.6" text-anchor="middle" font-family="Liberation Sans" font-weight="700" font-size="14" fill="#E6E7EA">?</text></svg>
<div class="t" style="left:107px;top:607px;font-family:&quot;Liberation Sans&quot;, sans-serif;font-size:19px;color:#DFE1E5;font-weight:400;letter-spacing:-0.36px;">jjcc.exe</div>
<svg style="position:absolute;left:79px;top:650px;" width="24" height="24" viewBox="0 0 24 24" fill="none"><path d="M12 0.6 L21.8 6 L21.8 17.8 L12 23.3 L2.2 17.8 L2.2 6 Z" stroke="#B07CE8" stroke-width="1.55" fill="#2E2838" stroke-linejoin="round"/><path d="M15.6 9.2 A4.6 4.6 0 1 0 15.6 15.2" stroke="#B07CE8" stroke-width="1.55"/><rect x="0.8" y="0.8" width="8.6" height="8.6" rx="2.5" fill="#25324D" stroke="#548AF7" stroke-width="1.6"/></svg>
<div class="t" style="left:107px;top:643px;font-family:&quot;Liberation Sans&quot;, sans-serif;font-size:19px;color:#DFE1E5;font-weight:400;letter-spacing:-0.12px;">safe_input.c</div>
<svg style="position:absolute;left:79px;top:686px;" width="24" height="24" viewBox="0 0 24 24" fill="none"><path d="M17.5 3.6 L12 0.6 L2.3 6 L2.3 17.3 L12 22.7 L17.5 19.7 Z" fill="#2E2838" stroke="none"/><path d="M17.5 3.6 L12 0.6 L2.3 6 L2.3 17.3 L12 22.7 L17.5 19.7" stroke="#B07CE8" stroke-width="1.55" fill="none" stroke-linejoin="round" stroke-linecap="round"/><path d="M15.4 9.2 A4.4 4.4 0 1 0 15.4 15.4" stroke="#B07CE8" stroke-width="1.55"/><path d="M20.4 3.2 V10 M17 6.6 H23.8 M20.4 13.9 V20.7 M17 17.3 H23.8" stroke="#B07CE8" stroke-width="1.55"/><rect x="0.8" y="0.8" width="8.6" height="8.6" rx="2.5" fill="#25324D" stroke="#548AF7" stroke-width="1.6"/></svg>
<div class="t" style="left:107px;top:679px;font-family:&quot;Liberation Sans&quot;, sans-serif;font-size:19px;color:#DFE1E5;font-weight:400;letter-spacing:0.19px;">selectionsort.cpp</div>
<svg style="position:absolute;left:82px;top:724px;" width="19" height="19" viewBox="0 0 19 19" fill="none"><rect x="0.8" y="0.8" width="17.4" height="17.4" rx="2.8" fill="#3F4145" stroke="#CED0D6" stroke-width="1.5"/><text x="9.5" y="14.6" text-anchor="middle" font-family="Liberation Sans" font-weight="700" font-size="14" fill="#E6E7EA">?</text></svg>
<div class="t" style="left:107px;top:715px;font-family:&quot;Liberation Sans&quot;, sans-serif;font-size:19px;color:#DFE1E5;font-weight:400;letter-spacing:0.00px;">selectionsort.exe</div>
<div style="position:absolute;left:19px;top:752px;width:647px;height:36px;background:#43454A;border-radius:6px;"></div>
<svg style="position:absolute;left:79px;top:758px;" width="24" height="24" viewBox="0 0 24 24" fill="none"><path d="M12 0.6 L21.8 6 L21.8 17.8 L12 23.3 L2.2 17.8 L2.2 6 Z" stroke="#B07CE8" stroke-width="1.55" fill="#2E2838" stroke-linejoin="round"/><path d="M15.6 9.2 A4.6 4.6 0 1 0 15.6 15.2" stroke="#B07CE8" stroke-width="1.55"/><rect x="0.8" y="0.8" width="8.6" height="8.6" rx="2.5" fill="#25324D" stroke="#548AF7" stroke-width="1.6"/></svg>
<div class="t" style="left:107px;top:751px;font-family:&quot;Liberation Sans&quot;, sans-serif;font-size:19px;color:#DFE1E5;font-weight:400;letter-spacing:-0.27px;">shell_sort.c</div>
<svg style="position:absolute;left:82px;top:796px;" width="19" height="19" viewBox="0 0 19 19" fill="none"><rect x="0.8" y="0.8" width="17.4" height="17.4" rx="2.8" fill="#3F4145" stroke="#CED0D6" stroke-width="1.5"/><text x="9.5" y="14.6" text-anchor="middle" font-family="Liberation Sans" font-weight="700" font-size="14" fill="#E6E7EA">?</text></svg>
<div class="t" style="left:107px;top:787px;font-family:&quot;Liberation Sans&quot;, sans-serif;font-size:19px;color:#DFE1E5;font-weight:400;letter-spacing:-0.38px;">shell_sort.exe</div>
<svg style="position:absolute;left:79px;top:830px;" width="24" height="24" viewBox="0 0 24 24" fill="none"><path d="M12 0.6 L21.8 6 L21.8 17.8 L12 23.3 L2.2 17.8 L2.2 6 Z" stroke="#B07CE8" stroke-width="1.55" fill="#2E2838" stroke-linejoin="round"/><path d="M15.6 9.2 A4.6 4.6 0 1 0 15.6 15.2" stroke="#B07CE8" stroke-width="1.55"/><rect x="0.8" y="0.8" width="8.6" height="8.6" rx="2.5" fill="#25324D" stroke="#548AF7" stroke-width="1.6"/></svg>
<div class="t" style="left:107px;top:823px;font-family:&quot;Liberation Sans&quot;, sans-serif;font-size:19px;color:#DFE1E5;font-weight:400;letter-spacing:-0.20px;">Test.c</div>
<svg style="position:absolute;left:82px;top:868px;" width="19" height="19" viewBox="0 0 19 19" fill="none"><rect x="0.8" y="0.8" width="17.4" height="17.4" rx="2.8" fill="#3F4145" stroke="#CED0D6" stroke-width="1.5"/><text x="9.5" y="14.6" text-anchor="middle" font-family="Liberation Sans" font-weight="700" font-size="14" fill="#E6E7EA">?</text></svg>
<div class="t" style="left:107px;top:859px;font-family:&quot;Liberation Sans&quot;, sans-serif;font-size:19px;color:#DFE1E5;font-weight:400;letter-spacing:-0.29px;">Test.exe</div>
<svg style="position:absolute;left:79px;top:902px;" width="24" height="24" viewBox="0 0 24 24" fill="none"><path d="M12 0.6 L21.8 6 L21.8 17.8 L12 23.3 L2.2 17.8 L2.2 6 Z" stroke="#B07CE8" stroke-width="1.55" fill="#2E2838" stroke-linejoin="round"/><path d="M15.6 9.2 A4.6 4.6 0 1 0 15.6 15.2" stroke="#B07CE8" stroke-width="1.55"/><rect x="0.8" y="0.8" width="8.6" height="8.6" rx="2.5" fill="#25324D" stroke="#548AF7" stroke-width="1.6"/></svg>
<div class="t" style="left:107px;top:895px;font-family:&quot;Liberation Sans&quot;, sans-serif;font-size:19px;color:#DFE1E5;font-weight:400;letter-spacing:0.00px;">Test2.c</div>
</div>
<div style="position:absolute;left:732px;top:125px;width:12px;height:626px;background:#46484C;opacity:.75;border-radius:0;"></div>
<div style="position:absolute;left:745px;top:61px;width:1px;height:915px;background:#1E1F22;"></div>
<div style="position:absolute;left:746px;top:61px;width:1754px;height:915px;background:#1E1F22;"></div>
<svg style="position:absolute;left:766px;top:81px;" width="23" height="23" viewBox="0 0 24 24" fill="none"><path d="M17.5 3.6 L12 0.6 L2.3 6 L2.3 17.3 L12 22.7 L17.5 19.7 Z" fill="none" stroke="none"/><path d="M17.5 3.6 L12 0.6 L2.3 6 L2.3 17.3 L12 22.7 L17.5 19.7" stroke="#9D72D6" stroke-width="1.55" fill="none" stroke-linejoin="round" stroke-linecap="round"/><path d="M15.4 9.2 A4.4 4.4 0 1 0 15.4 15.4" stroke="#9D72D6" stroke-width="1.55"/><path d="M20.4 3.2 V10 M17 6.6 H23.8 M20.4 13.9 V20.7 M17 17.3 H23.8" stroke="#9D72D6" stroke-width="1.55"/></svg>
<div class="t" style="left:797px;top:73px;font-family:&quot;Liberation Sans&quot;, sans-serif;font-size:20px;color:#DFE1E5;font-weight:400;letter-spacing:0px;">bubblesort.cpp</div>
<svg style="position:absolute;left:993px;top:81px;" width="23" height="23" viewBox="0 0 24 24" fill="none"><path d="M12 0.6 L21.8 6 L21.8 17.8 L12 23.3 L2.2 17.8 L2.2 6 Z" stroke="#9D72D6" stroke-width="1.55" fill="none" stroke-linejoin="round"/><path d="M15.6 9.2 A4.6 4.6 0 1 0 15.6 15.2" stroke="#9D72D6" stroke-width="1.55"/></svg>
<div class="t" style="left:1022px;top:73px;font-family:&quot;Liberation Sans&quot;, sans-serif;font-size:20px;color:#DFE1E5;font-weight:400;letter-spacing:-0.73px;">shell_sort.c</div>
<svg style="position:absolute;left:1180px;top:81px;" width="23" height="23" viewBox="0 0 24 24" fill="none"><path d="M17.5 3.6 L12 0.6 L2.3 6 L2.3 17.3 L12 22.7 L17.5 19.7 Z" fill="none" stroke="none"/><path d="M17.5 3.6 L12 0.6 L2.3 6 L2.3 17.3 L12 22.7 L17.5 19.7" stroke="#9D72D6" stroke-width="1.55" fill="none" stroke-linejoin="round" stroke-linecap="round"/><path d="M15.4 9.2 A4.4 4.4 0 1 0 15.4 15.4" stroke="#9D72D6" stroke-width="1.55"/><path d="M20.4 3.2 V10 M17 6.6 H23.8 M20.4 13.9 V20.7 M17 17.3 H23.8" stroke="#9D72D6" stroke-width="1.55"/></svg>
<div class="t" style="left:1210px;top:73px;font-family:&quot;Liberation Sans&quot;, sans-serif;font-size:20px;color:#DFE1E5;font-weight:400;letter-spacing:-0.31px;">selectionsort.cpp</div>
<svg style="position:absolute;left:1422px;top:81px;" width="23" height="23" viewBox="0 0 24 24" fill="none"><path d="M17.5 3.6 L12 0.6 L2.3 6 L2.3 17.3 L12 22.7 L17.5 19.7 Z" fill="none" stroke="none"/><path d="M17.5 3.6 L12 0.6 L2.3 6 L2.3 17.3 L12 22.7 L17.5 19.7" stroke="#9D72D6" stroke-width="1.55" fill="none" stroke-linejoin="round" stroke-linecap="round"/><path d="M15.4 9.2 A4.4 4.4 0 1 0 15.4 15.4" stroke="#9D72D6" stroke-width="1.55"/><path d="M20.4 3.2 V10 M17 6.6 H23.8 M20.4 13.9 V20.7 M17 17.3 H23.8" stroke="#9D72D6" stroke-width="1.55"/></svg>
<div class="t" style="left:1451px;top:73px;font-family:&quot;Liberation Sans&quot;, sans-serif;font-size:20px;color:#DFE1E5;font-weight:400;letter-spacing:-0.08px;">insertsort.cpp</div>
<svg style="position:absolute;left:1635px;top:81px;" width="23" height="23" viewBox="0 0 24 24" fill="none"><path d="M17.5 3.6 L12 0.6 L2.3 6 L2.3 17.3 L12 22.7 L17.5 19.7 Z" fill="none" stroke="none"/><path d="M17.5 3.6 L12 0.6 L2.3 6 L2.3 17.3 L12 22.7 L17.5 19.7" stroke="#9D72D6" stroke-width="1.55" fill="none" stroke-linejoin="round" stroke-linecap="round"/><path d="M15.4 9.2 A4.4 4.4 0 1 0 15.4 15.4" stroke="#9D72D6" stroke-width="1.55"/><path d="M20.4 3.2 V10 M17 6.6 H23.8 M20.4 13.9 V20.7 M17 17.3 H23.8" stroke="#9D72D6" stroke-width="1.55"/></svg>
<div class="t" style="left:1664px;top:73px;font-family:&quot;Liberation Sans&quot;, sans-serif;font-size:20px;color:#DFE1E5;font-weight:400;letter-spacing:-0.18px;">homework.cpp</div>
<svg style="position:absolute;left:1858px;top:81px;" width="23" height="23" viewBox="0 0 24 24" fill="none"><path d="M12 0.6 L21.8 6 L21.8 17.8 L12 23.3 L2.2 17.8 L2.2 6 Z" stroke="#A57CE3" stroke-width="1.55" fill="none" stroke-linejoin="round"/><path d="M15.6 9.2 A4.6 4.6 0 1 0 15.6 15.2" stroke="#A57CE3" stroke-width="1.55"/></svg>
<div class="t" style="left:1889px;top:73px;font-family:&quot;Liberation Sans&quot;, sans-serif;font-size:20px;color:#DFE1E5;font-weight:400;letter-spacing:-0.44px;">backup_homework.c</div>
<svg style="position:absolute;left:2080px;top:85px;" width="14" height="14" viewBox="0 0 14 14" fill="none"><path d="M1.5 1.5 L12.5 12.5 M12.5 1.5 L1.5 12.5" stroke="#8C8F94" stroke-width="1.6"/></svg>
<svg style="position:absolute;left:2466px;top:82px;" width="10" height="24" viewBox="0 0 10 24" fill="none"><circle cx="5" cy="3" r="2" fill="#CED0D6"/><circle cx="5" cy="11" r="2" fill="#CED0D6"/><circle cx="5" cy="19" r="2" fill="#CED0D6"/></svg>
<div style="position:absolute;left:746px;top:122px;width:1754px;height:1px;background:#393B40;"></div>
<div style="position:absolute;left:1557px;top:121px;width:282px;height:2px;background:#46484C;"></div>
<div style="position:absolute;left:1839px;top:117px;width:272px;height:5px;background:#3574F0;border-radius:3px 3px 0 0;"></div>
<div style="position:absolute;left:0;top:190px;width:2500px;height:750px;overflow:hidden;">
<div style="position:absolute;left:0;top:-190px;width:2500px;height:1600px;">
<div style="position:absolute;left:746px;top:874px;width:1754px;height:33px;background:#26282E;"></div>
<div style="position:absolute;left:846px;top:190px;width:1px;height:750px;background:#393B40;"></div>
<div style="position:absolute;left:894px;top:190px;width:1px;height:57px;background:#393B40;"></div>
<div style="position:absolute;left:942px;top:190px;width:1px;height:24px;background:#393B40;"></div>
<div style="position:absolute;left:894px;top:379px;width:1px;height:132px;background:#393B40;"></div>
<div style="position:absolute;left:942px;top:412px;width:1px;height:33px;background:#393B40;"></div>
<div style="position:absolute;left:894px;top:709px;width:1px;height:33px;background:#393B40;"></div>
<div style="position:absolute;left:849px;top:874px;width:12px;height:33px;background:#43454A;"></div>
<div class="t" style="left:746px;top:184px;height:33px;line-height:33px;width:35px;text-align:right;font-family:&quot;Liberation Mono&quot;, monospace;font-size:20px;color:#4B5059">64</div>
<div class="t" style="left:849px;top:183px;height:33px;line-height:33px;font-family:&quot;Liberation Mono&quot;, monospace;font-size:20px;color:#BCBEC4">            matrix[i][j] = magic[i][j];</div>
<div class="t" style="left:746px;top:217px;height:33px;line-height:33px;width:35px;text-align:right;font-family:&quot;Liberation Mono&quot;, monospace;font-size:20px;color:#4B5059">65</div>
<div class="t" style="left:849px;top:216px;height:33px;line-height:33px;font-family:&quot;Liberation Mono&quot;, monospace;font-size:20px;color:#BCBEC4">        }</div>
<div class="t" style="left:746px;top:250px;height:33px;line-height:33px;width:35px;text-align:right;font-family:&quot;Liberation Mono&quot;, monospace;font-size:20px;color:#4B5059">66</div>
<div class="t" style="left:849px;top:249px;height:33px;line-height:33px;font-family:&quot;Liberation Mono&quot;, monospace;font-size:20px;color:#BCBEC4">    }</div>
<div class="t" style="left:746px;top:283px;height:33px;line-height:33px;width:35px;text-align:right;font-family:&quot;Liberation Mono&quot;, monospace;font-size:20px;color:#4B5059">67</div>
<div class="t" style="left:746px;top:316px;height:33px;line-height:33px;width:35px;text-align:right;font-family:&quot;Liberation Mono&quot;, monospace;font-size:20px;color:#4B5059">68</div>
<div class="t" style="left:849px;top:315px;height:33px;line-height:33px;font-family:&quot;Liberation Mono&quot;, monospace;font-size:20px;color:#BCBEC4">    printf(<span style="display:inline-block;vertical-align:top;width:65px;height:22px;line-height:22px;margin:5px 3px 0 3px;padding:0 0 0 3px;box-sizing:border-box;overflow:hidden;background:#2D2F33;border-radius:4px;font-family:&quot;Liberation Sans&quot;, sans-serif;font-size:18px;letter-spacing:-0.2px;color:#8A8D93">format:</span><span style="color:#6AAB73">&quot;</span><span style="color:#6AAB73;display:inline-block;vertical-align:top;width:38px;white-space:nowrap;overflow:visible;font-size:19px">矩阵</span><span style="color:#6AAB73">:</span><span style="color:#CF8E6D">\n</span><span style="color:#6AAB73">&quot;</span>);</div>
<div class="t" style="left:746px;top:349px;height:33px;line-height:33px;width:35px;text-align:right;font-family:&quot;Liberation Mono&quot;, monospace;font-size:20px;color:#4B5059">69</div>
<div class="t" style="left:849px;top:348px;height:33px;line-height:33px;font-family:&quot;Liberation Mono&quot;, monospace;font-size:20px;color:#BCBEC4">    <span style="color:#CF8E6D">for</span><span style="color:#BCBEC4"> (</span><span style="color:#CF8E6D">int</span><span style="color:#BCBEC4"> i = </span><span style="color:#2AACB8">0</span><span style="color:#BCBEC4">; i &lt; n; i++) {</span></div>
<div class="t" style="left:746px;top:382px;height:33px;line-height:33px;width:35px;text-align:right;font-family:&quot;Liberation Mono&quot;, monospace;font-size:20px;color:#4B5059">70</div>
<div class="t" style="left:849px;top:381px;height:33px;line-height:33px;font-family:&quot;Liberation Mono&quot;, monospace;font-size:20px;color:#BCBEC4">        <span style="color:#CF8E6D">for</span><span style="color:#BCBEC4"> (</span><span style="color:#CF8E6D">int</span><span style="color:#BCBEC4"> j = </span><span style="color:#2AACB8">0</span><span style="color:#BCBEC4">; j &lt; n; j++) {</span></div>
<div class="t" style="left:746px;top:415px;height:33px;line-height:33px;width:35px;text-align:right;font-family:&quot;Liberation Mono&quot;, monospace;font-size:20px;color:#4B5059">71</div>
<div class="t" style="left:849px;top:414px;height:33px;line-height:33px;font-family:&quot;Liberation Mono&quot;, monospace;font-size:20px;color:#BCBEC4">            printf(<span style="display:inline-block;vertical-align:top;width:65px;height:22px;line-height:22px;margin:5px 3px 0 3px;padding:0 0 0 3px;box-sizing:border-box;overflow:hidden;background:#2D2F33;border-radius:4px;font-family:&quot;Liberation Sans&quot;, sans-serif;font-size:18px;letter-spacing:-0.2px;color:#8A8D93">format:</span><span style="color:#6AAB73">&quot;</span><span style="color:#CF8E6D">%d</span><span style="color:#6AAB73"> &quot;</span>, matrix[i][j]);</div>
<div class="t" style="left:746px;top:448px;height:33px;line-height:33px;width:35px;text-align:right;font-family:&quot;Liberation Mono&quot;, monospace;font-size:20px;color:#4B5059">72</div>
<div class="t" style="left:849px;top:447px;height:33px;line-height:33px;font-family:&quot;Liberation Mono&quot;, monospace;font-size:20px;color:#BCBEC4">        }</div>
<div class="t" style="left:746px;top:481px;height:33px;line-height:33px;width:35px;text-align:right;font-family:&quot;Liberation Mono&quot;, monospace;font-size:20px;color:#4B5059">73</div>
<div class="t" style="left:849px;top:480px;height:33px;line-height:33px;font-family:&quot;Liberation Mono&quot;, monospace;font-size:20px;color:#BCBEC4">        printf(<span style="display:inline-block;vertical-align:top;width:65px;height:22px;line-height:22px;margin:5px 3px 0 3px;padding:0 0 0 3px;box-sizing:border-box;overflow:hidden;background:#2D2F33;border-radius:4px;font-family:&quot;Liberation Sans&quot;, sans-serif;font-size:18px;letter-spacing:-0.2px;color:#8A8D93">format:</span><span style="color:#6AAB73">&quot;</span><span style="color:#CF8E6D">\n</span><span style="color:#6AAB73">&quot;</span>);</div>
<div class="t" style="left:746px;top:514px;height:33px;line-height:33px;width:35px;text-align:right;font-family:&quot;Liberation Mono&quot;, monospace;font-size:20px;color:#4B5059">74</div>
<div class="t" style="left:849px;top:513px;height:33px;line-height:33px;font-family:&quot;Liberation Mono&quot;, monospace;font-size:20px;color:#BCBEC4">    }</div>
<div class="t" style="left:746px;top:547px;height:33px;line-height:33px;width:35px;text-align:right;font-family:&quot;Liberation Mono&quot;, monospace;font-size:20px;color:#4B5059">75</div>
<div class="t" style="left:746px;top:580px;height:33px;line-height:33px;width:35px;text-align:right;font-family:&quot;Liberation Mono&quot;, monospace;font-size:20px;color:#4B5059">76</div>
<div class="t" style="left:849px;top:579px;height:33px;line-height:33px;font-family:&quot;Liberation Mono&quot;, monospace;font-size:20px;color:#BCBEC4">    printf(<span style="display:inline-block;vertical-align:top;width:65px;height:22px;line-height:22px;margin:5px 3px 0 3px;padding:0 0 0 3px;box-sizing:border-box;overflow:hidden;background:#2D2F33;border-radius:4px;font-family:&quot;Liberation Sans&quot;, sans-serif;font-size:18px;letter-spacing:-0.2px;color:#8A8D93">format:</span><span style="color:#6AAB73">&quot;</span><span style="color:#6AAB73;display:inline-block;vertical-align:top;width:133px;white-space:nowrap;overflow:visible;font-size:19px">是否为魔方矩阵</span><span style="color:#6AAB73">: </span><span style="color:#CF8E6D">%s</span><span style="color:#CF8E6D">\n</span><span style="color:#6AAB73">&quot;</span>, is_magic_square(matrix, n) ? <span style="color:#6AAB73">&quot;</span><span style="color:#6AAB73;display:inline-block;vertical-align:top;width:19px;white-space:nowrap;overflow:visible;font-size:19px">是</span><span style="color:#6AAB73">&quot;</span> : <span style="color:#6AAB73">&quot;</span><span style="color:#6AAB73;display:inline-block;vertical-align:top;width:19px;white-space:nowrap;overflow:visible;font-size:19px">否</span><span style="color:#6AAB73">&quot;</span>);</div>
<div class="t" style="left:746px;top:613px;height:33px;line-height:33px;width:35px;text-align:right;font-family:&quot;Liberation Mono&quot;, monospace;font-size:20px;color:#4B5059">77</div>
<div class="t" style="left:746px;top:646px;height:33px;line-height:33px;width:35px;text-align:right;font-family:&quot;Liberation Mono&quot;, monospace;font-size:20px;color:#4B5059">78</div>
<div class="t" style="left:849px;top:645px;height:33px;line-height:33px;font-family:&quot;Liberation Mono&quot;, monospace;font-size:20px;color:#BCBEC4">    <span style="color:#7A7E85">// </span><span style="color:#7A7E85;display:inline-block;vertical-align:top;width:76px;white-space:nowrap;overflow:visible;font-size:19px">释放内存</span></div>
<div class="t" style="left:746px;top:679px;height:33px;line-height:33px;width:35px;text-align:right;font-family:&quot;Liberation Mono&quot;, monospace;font-size:20px;color:#4B5059">79</div>
<div class="t" style="left:849px;top:678px;height:33px;line-height:33px;font-family:&quot;Liberation Mono&quot;, monospace;font-size:20px;color:#BCBEC4">    <span style="color:#CF8E6D">for</span><span style="color:#BCBEC4"> (</span><span style="color:#CF8E6D">int</span><span style="color:#BCBEC4"> i = </span><span style="color:#2AACB8">0</span><span style="color:#BCBEC4">; i &lt; n; i++) {</span></div>
<div class="t" style="left:746px;top:712px;height:33px;line-height:33px;width:35px;text-align:right;font-family:&quot;Liberation Mono&quot;, monospace;font-size:20px;color:#4B5059">80</div>
<div class="t" style="left:849px;top:711px;height:33px;line-height:33px;font-family:&quot;Liberation Mono&quot;, monospace;font-size:20px;color:#BCBEC4">        free(matrix[i]);</div>
<div class="t" style="left:746px;top:745px;height:33px;line-height:33px;width:35px;text-align:right;font-family:&quot;Liberation Mono&quot;, monospace;font-size:20px;color:#4B5059">81</div>
<div class="t" style="left:849px;top:744px;height:33px;line-height:33px;font-family:&quot;Liberation Mono&quot;, monospace;font-size:20px;color:#BCBEC4">    }</div>
<div class="t" style="left:746px;top:778px;height:33px;line-height:33px;width:35px;text-align:right;font-family:&quot;Liberation Mono&quot;, monospace;font-size:20px;color:#4B5059">82</div>
<div class="t" style="left:849px;top:777px;height:33px;line-height:33px;font-family:&quot;Liberation Mono&quot;, monospace;font-size:20px;color:#BCBEC4">    free(matrix);</div>
<div class="t" style="left:746px;top:811px;height:33px;line-height:33px;width:35px;text-align:right;font-family:&quot;Liberation Mono&quot;, monospace;font-size:20px;color:#4B5059">83</div>
<div class="t" style="left:746px;top:844px;height:33px;line-height:33px;width:35px;text-align:right;font-family:&quot;Liberation Mono&quot;, monospace;font-size:20px;color:#4B5059">84</div>
<div class="t" style="left:849px;top:843px;height:33px;line-height:33px;font-family:&quot;Liberation Mono&quot;, monospace;font-size:20px;color:#BCBEC4">    <span style="color:#CF8E6D">return</span> <span style="color:#2AACB8">0</span>;</div>
<div class="t" style="left:746px;top:877px;height:33px;line-height:33px;width:35px;text-align:right;font-family:&quot;Liberation Mono&quot;, monospace;font-size:20px;color:#A1A3AB">85</div>
<div class="t" style="left:849px;top:876px;height:33px;line-height:33px;font-family:&quot;Liberation Mono&quot;, monospace;font-size:20px;color:#BCBEC4">}</div>
<div class="t" style="left:746px;top:910px;height:33px;line-height:33px;width:35px;text-align:right;font-family:&quot;Liberation Mono&quot;, monospace;font-size:20px;color:#4B5059">86</div>
<div style="position:absolute;left:860px;top:877px;width:3px;height:27px;background:#CED0D6;"></div>
<svg style="position:absolute;left:860px;top:850px;" width="22" height="22" viewBox="0 0 22 22" fill="none"><path d="M2 3 H14 M2 8 H11 M2 13 H7" stroke="#CED0D6" stroke-width="1.5"/><path d="M10 20 L11 16 L18 9 L21 12 L14 19 Z" stroke="#CED0D6" stroke-width="1.5" stroke-linejoin="round"/></svg>
</div></div>
<div style="position:absolute;left:2290px;top:190px;width:1px;height:750px;background:#393B40;"></div>
<div style="position:absolute;left:746px;top:123px;width:1754px;height:66px;background:#1E1F22;"></div>
<div style="position:absolute;left:981px;top:123px;width:12px;height:33px;background:#43454A;"></div>
<div class="t" style="left:746px;top:125px;height:33px;line-height:33px;width:35px;text-align:right;font-family:&quot;Liberation Mono&quot;, monospace;font-size:20px;color:#4B5059">46</div>
<div class="t" style="left:849px;top:124px;height:33px;line-height:33px;font-family:&quot;Liberation Mono&quot;, monospace;font-size:20px;color:#BCBEC4"><span style="color:#CF8E6D">int</span> <span style="color:#56A8F5">main</span>() {</div>
<div class="t" style="left:746px;top:158px;height:33px;line-height:33px;width:35px;text-align:right;font-family:&quot;Liberation Mono&quot;, monospace;font-size:20px;color:#4B5059">62</div>
<div class="t" style="left:849px;top:157px;height:33px;line-height:33px;font-family:&quot;Liberation Mono&quot;, monospace;font-size:20px;color:#BCBEC4">    <span style="color:#CF8E6D">for</span><span style="color:#BCBEC4"> (</span><span style="color:#CF8E6D">int</span><span style="color:#BCBEC4"> i = </span><span style="color:#2AACB8">0</span><span style="color:#BCBEC4">; i &lt; n; i++) {</span></div>
<div style="position:absolute;left:746px;top:189px;width:1754px;height:1px;background:#393B40;"></div>
<svg style="position:absolute;left:2349px;top:134px;" width="18" height="17" viewBox="0 0 18 17" fill="none"><path d="M9 1 L17.5 16 H0.5 Z" fill="#D9A441" stroke="#D9A441" stroke-width="1" stroke-linejoin="round"/><path d="M9 5.5 V11" stroke="#1E1F22" stroke-width="2"/><circle cx="9" cy="13.5" r="1.1" fill="#1E1F22"/></svg>
<div class="t" style="left:2370px;top:124px;font-family:&quot;Liberation Sans&quot;, sans-serif;font-size:19px;color:#CED0D6;font-weight:400;">5</div>
<svg style="position:absolute;left:2393px;top:134px;" width="18" height="17" viewBox="0 0 18 17" fill="none"><path d="M9 1 L17.5 16 H0.5 Z" fill="#8D7747" stroke="#8D7747" stroke-width="1" stroke-linejoin="round"/><path d="M9 5.5 V11" stroke="#1E1F22" stroke-width="2"/><circle cx="9" cy="13.5" r="1.1" fill="#1E1F22"/></svg>
<div class="t" style="left:2414px;top:124px;font-family:&quot;Liberation Sans&quot;, sans-serif;font-size:19px;color:#CED0D6;font-weight:400;">1</div>
<svg style="position:absolute;left:2443px;top:137px;" width="14" height="8" viewBox="0 0 14 8" fill="none"><path d="M1 7 L7 1 L13 7" stroke="#CED0D6" stroke-width="1.6" stroke-linecap="round" stroke-linejoin="round"/></svg>
<svg style="position:absolute;left:2474px;top:139px;" width="14" height="8" viewBox="0 0 14 8" fill="none"><path d="M1 1 L7 7 L13 1" stroke="#CED0D6" stroke-width="1.6" stroke-linecap="round" stroke-linejoin="round"/></svg>
<div style="position:absolute;left:2478px;top:220px;width:21px;height:3px;background:#C4A04A;"></div>
<div style="position:absolute;left:2478px;top:280px;width:21px;height:3px;background:#C4A04A;"></div>
<div style="position:absolute;left:2478px;top:359px;width:21px;height:3px;background:#C4A04A;"></div>
<div style="position:absolute;left:2478px;top:425px;width:21px;height:3px;background:#C4A04A;"></div>
<div style="position:absolute;left:2478px;top:486px;width:21px;height:3px;background:#C4A04A;"></div>
<div style="position:absolute;left:2486px;top:686px;width:12px;height:209px;background:#474849;"></div>
<div style="position:absolute;left:746px;top:940px;width:1754px;height:1px;background:#393B40;"></div>
<svg style="position:absolute;left:765px;top:951px;" width="18" height="18" viewBox="0 0 18 18" fill="none"><rect x="0.8" y="0.8" width="16.4" height="16.4" rx="2.5" fill="#4A2528" stroke="#DB5C5C" stroke-width="1.4"/><text x="9" y="14" text-anchor="middle" font-family="Liberation Sans" font-size="14" fill="#DB5C5C">f</text></svg>
<div class="t" style="left:792px;top:940px;font-family:&quot;Liberation Sans&quot;, sans-serif;font-size:19px;color:#BCBEC4;font-weight:400;">main</div>
<div style="position:absolute;left:2500px;top:61px;width:60px;height:1420px;background:#2B2D30;"></div>
<div style="position:absolute;left:2499px;top:61px;width:1px;height:1420px;background:#1E1F22;"></div>
<svg style="position:absolute;left:2517px;top:77px;" width="28" height="30" viewBox="0 0 28 30" fill="none"><path d="M4 20 C6 18 6 16 6 12 C6 7 9.5 3.5 14 3.5 C18.5 3.5 22 7 22 12 C22 16 22 18 24 20 Z" stroke="#CED0D6" stroke-width="1.8" stroke-linejoin="round"/><path d="M11 23 A3 3 0 0 0 17 23" stroke="#CED0D6" stroke-width="1.8"/><circle cx="23" cy="5" r="5" fill="#E55765"/></svg>
<svg style="position:absolute;left:2517px;top:139px;" width="30" height="30" viewBox="0 0 30 30" fill="none"><path d="M7 22 A10 10 0 1 1 22 8" stroke="#CED0D6" stroke-width="1.7"/><path d="M10 17 A5 5 0 1 1 18 11" stroke="#CED0D6" stroke-width="1.7"/><path d="M13 13 H27 V25 L24 22 H13 Z" stroke="#CED0D6" stroke-width="1.7" stroke-linejoin="round" fill="#2B2D30"/></svg>
<svg style="position:absolute;left:2518px;top:197px;" width="26" height="30" viewBox="0 0 26 30" fill="none"><ellipse cx="13" cy="6" rx="11" ry="4.5" stroke="#CED0D6" stroke-width="1.7"/><path d="M2 6 V24 C2 26.5 7 28.5 13 28.5 C19 28.5 24 26.5 24 24 V6 M2 12 C2 14.5 7 16.5 13 16.5 C19 16.5 24 14.5 24 12 M2 18 C2 20.5 7 22.5 13 22.5 C19 22.5 24 20.5 24 18" stroke="#CED0D6" stroke-width="1.7"/></svg>
<div style="position:absolute;left:61px;top:976px;width:2438px;height:1px;background:#1E1F22;"></div>
<div style="position:absolute;left:61px;top:977px;width:2438px;height:504px;background:#2B2D30;"></div>
<div class="t" style="left:80px;top:989px;font-family:&quot;Liberation Sans&quot;, sans-serif;font-size:19px;color:#DFE1E5;font-weight:700;">运行</div>
<svg style="position:absolute;left:159px;top:998px;" width="23" height="23" viewBox="0 0 24 24" fill="none"><path d="M17.5 3.6 L12 0.6 L2.3 6 L2.3 17.3 L12 22.7 L17.5 19.7 Z" fill="none" stroke="none"/><path d="M17.5 3.6 L12 0.6 L2.3 6 L2.3 17.3 L12 22.7 L17.5 19.7" stroke="#7F65A8" stroke-width="1.55" fill="none" stroke-linejoin="round" stroke-linecap="round"/><path d="M15.4 9.2 A4.4 4.4 0 1 0 15.4 15.4" stroke="#7F65A8" stroke-width="1.55"/><path d="M20.4 3.2 V10 M17 6.6 H23.8 M20.4 13.9 V20.7 M17 17.3 H23.8" stroke="#7F65A8" stroke-width="1.55"/></svg>
<div class="t" style="left:188px;top:989px;font-family:&quot;Liberation Sans&quot;, sans-serif;font-size:19px;color:#DFE1E5;font-weight:400;">backup_homework.c</div>
<svg style="position:absolute;left:380px;top:1003px;" width="13" height="13" viewBox="0 0 13 13" fill="none"><path d="M1.5 1.5 L11.5 11.5 M11.5 1.5 L1.5 11.5" stroke="#8C8F94" stroke-width="1.5"/></svg>
<div style="position:absolute;left:140px;top:1035px;width:269px;height:4px;background:#5A5D63;border-radius:2px;"></div>
<div style="position:absolute;left:61px;top:1038px;width:2438px;height:1px;background:#1E1F22;"></div>
<svg style="position:absolute;left:82px;top:1053px;" width="24" height="26" viewBox="0 0 24 26" fill="none"><path d="M17 4.5 A8.5 8.5 0 1 0 11 19.5" stroke="#CED0D6" stroke-width="1.7"/><path d="M12 1 L17.5 4.5 L13.5 9" stroke="#CED0D6" stroke-width="1.7" stroke-linejoin="round"/><path d="M11 12 L21 18 L11 24 Z" stroke="#57965C" stroke-width="1.8" stroke-linejoin="round"/></svg>
<div style="position:absolute;left:122px;top:1056px;width:18px;height:18px;background:#5A5A5A;border-radius:2px;"></div>
<div style="position:absolute;left:156px;top:1050px;width:1px;height:30px;background:#43454A;"></div>
<svg style="position:absolute;left:176px;top:1056px;" width="10" height="20" viewBox="0 0 10 20" fill="none"><circle cx="5" cy="2.5" r="1.9" fill="#CED0D6"/><circle cx="5" cy="9.5" r="1.9" fill="#CED0D6"/><circle cx="5" cy="16.5" r="1.9" fill="#CED0D6"/></svg>
<div style="position:absolute;left:61px;top:1091px;width:2438px;height:1px;background:#1E1F22;"></div>
<div style="position:absolute;left:118px;top:1091px;width:2381px;height:390px;background:#1E1F22;"></div>
<svg style="position:absolute;left:82px;top:1110px;" width="16" height="20" viewBox="0 0 16 20" fill="none"><path d="M8 19 V2 M1.5 8.5 L8 2 L14.5 8.5" stroke="#5E6166" stroke-width="1.6"/></svg>
<svg style="position:absolute;left:82px;top:1149px;" width="16" height="20" viewBox="0 0 16 20" fill="none"><path d="M8 1 V18 M1.5 11.5 L8 18 L14.5 11.5" stroke="#5E6166" stroke-width="1.6"/></svg>
<svg style="position:absolute;left:79px;top:1188px;" width="22" height="22" viewBox="0 0 22 22" fill="none"><path d="M1 2 H21 M1 11 H16 C19 11 21 13 21 15 C21 17 19 19 16 19 H10 M1 19 H5 M12 16 L9 19 L12 22" stroke="#CED0D6" stroke-width="1.6"/></svg>
<svg style="position:absolute;left:79px;top:1227px;" width="22" height="20" viewBox="0 0 22 20" fill="none"><path d="M1 2 H8 M1 9 H8 M1 16 H6 M1 19 H21 M15 1 V15 M10 10 L15 15 L20 10" stroke="#CED0D6" stroke-width="1.6"/></svg>
<svg style="position:absolute;left:79px;top:1265px;" width="22" height="21" viewBox="0 0 22 21" fill="none"><rect x="1" y="7" width="20" height="10" rx="2.5" stroke="#CED0D6" stroke-width="1.6"/><path d="M5 7 V2 H17 V7 M5 13 V20 H17 V13" stroke="#CED0D6" stroke-width="1.6" fill="#2B2D30"/></svg>
<svg style="position:absolute;left:81px;top:1302px;" width="18" height="23" viewBox="0 0 18 23" fill="none"><path d="M1 5 H17 M6 5 V2 H12 V5 M3 5 L4 22 H14 L15 5 M7.5 9 V18 M10.5 9 V18" stroke="#CED0D6" stroke-width="1.6"/></svg>
<div class="t" style="left:136px;top:1090px;font-family:&quot;Liberation Mono&quot;, monospace;font-size:20px;color:#BCBEC4">C:\code\c\backup_homework.exe</div>
<div class="t" style="left:136px;top:1123px;font-family:&quot;Liberation Mono&quot;, monospace;font-size:20px;color:#BCBEC4"><span style="color:#BCBEC4;display:inline-block;vertical-align:top;width:38px;white-space:nowrap;overflow:visible;font-size:19px">矩阵</span>:</div>
<div class="t" style="left:136px;top:1156px;font-family:&quot;Liberation Mono&quot;, monospace;font-size:20px;color:#BCBEC4">2 7 6</div>
<div class="t" style="left:136px;top:1188px;font-family:&quot;Liberation Mono&quot;, monospace;font-size:20px;color:#BCBEC4">9 5 1</div>
<div class="t" style="left:136px;top:1221px;font-family:&quot;Liberation Mono&quot;, monospace;font-size:20px;color:#BCBEC4">4 3 8</div>
<div class="t" style="left:136px;top:1254px;font-family:&quot;Liberation Mono&quot;, monospace;font-size:20px;color:#BCBEC4"><span style="color:#BCBEC4;display:inline-block;vertical-align:top;width:133px;white-space:nowrap;overflow:visible;font-size:19px">是否为魔方矩阵</span>: <span style="color:#BCBEC4;display:inline-block;vertical-align:top;width:19px;white-space:nowrap;overflow:visible;font-size:19px">是</span></div>
<div class="t" style="left:136px;top:1320px;font-family:&quot;Liberation Mono&quot;, monospace;font-size:20px;color:#BCBEC4"><span style="color:#BCBEC4;display:inline-block;vertical-align:top;width:209px;white-space:nowrap;overflow:visible;font-size:19px">进程已结束，退出代码为</span> 0</div>
<div style="position:absolute;left:0px;top:1481px;width:2560px;height:1px;background:#1E1F22;"></div>
<div style="position:absolute;left:0px;top:1482px;width:2560px;height:46px;background:#2B2D30;"></div>
<div style="position:absolute;left:21px;top:1497px;width:12px;height:12px;border:1.6px solid #548AF7;border-radius:2.5px;background:#25324D;box-sizing:border-box;"></div>
<div class="t" style="left:39px;top:1483px;font-family:&quot;Liberation Sans&quot;, sans-serif;font-size:19px;color:#A8ABB0;font-weight:400;">c</div>
<svg style="position:absolute;left:61px;top:1497px;" width="8" height="13" viewBox="0 0 8 13" fill="none"><path d="M1 1 L6.5 6.5 L1 12" stroke="#A8ABB0" stroke-width="1.6" stroke-linecap="round" stroke-linejoin="round"/></svg>
<svg style="position:absolute;left:84px;top:1492px;" width="23" height="23" viewBox="0 0 24 24" fill="none"><path d="M12 0.6 L21.8 6 L21.8 17.8 L12 23.3 L2.2 17.8 L2.2 6 Z" stroke="#B07CE8" stroke-width="1.55" fill="#2F2640" stroke-linejoin="round"/><path d="M15.6 9.2 A4.6 4.6 0 1 0 15.6 15.2" stroke="#B07CE8" stroke-width="1.55"/><rect x="0.8" y="0.8" width="8.6" height="8.6" rx="2.5" fill="#25324D" stroke="#548AF7" stroke-width="1.6"/></svg>
<div class="t" style="left:115px;top:1483px;font-family:&quot;Liberation Sans&quot;, sans-serif;font-size:19px;color:#A8ABB0;font-weight:400;">backup_homework.c</div>
<div class="t" style="left:1697px;top:1484px;font-family:&quot;Liberation Sans&quot;, sans-serif;font-size:19px;color:#A8ABB0;font-weight:400;letter-spacing:0.6px;">.clang-tidy</div>
<div class="t" style="left:1814px;top:1484px;font-family:&quot;Liberation Sans&quot;, sans-serif;font-size:19px;color:#A8ABB0;font-weight:400;">85:2</div>
<div class="t" style="left:1875px;top:1484px;font-family:&quot;Liberation Sans&quot;, sans-serif;font-size:19px;color:#A8ABB0;font-weight:400;">CRLF</div>
<div class="t" style="left:1943px;top:1484px;font-family:&quot;Liberation Sans&quot;, sans-serif;font-size:19px;color:#A8ABB0;font-weight:400;">UTF-8</div>
<svg style="position:absolute;left:2019px;top:1493px;" width="22" height="22" viewBox="0 0 22 22" fill="none"><path d="M3 20 V2 H16 V10 M6 7 H13 M6 11 H10 M6 15 H9" stroke="#A8ABB0" stroke-width="1.6"/><circle cx="15.5" cy="15.5" r="3.5" stroke="#A8ABB0" stroke-width="1.6"/><path d="M18 18 L21 21" stroke="#A8ABB0" stroke-width="1.6"/></svg>
<div class="t" style="left:2048px;top:1484px;font-family:&quot;Liberation Sans&quot;, sans-serif;font-size:19px;color:#A8ABB0;font-weight:400;">4 个空格*</div>
<div style="position:absolute;left:0px;top:1528px;width:2560px;height:72px;background:linear-gradient(90deg,#E9DCDD 0%,#E8DCDF 35%,#E4DAE3 50%,#E9DDDF 62%,#EDE0DC 75%,#EADCDC 100%);"></div>
<div style="position:absolute;left:0px;top:1528px;width:2560px;height:1px;background:#CFC6C8;"></div>
<svg style="position:absolute;left:26px;top:1546px;" width="42" height="38" viewBox="0 0 42 38" fill="none"><defs><linearGradient id="mg" x1="0" y1="0" x2="0" y2="1"><stop offset="0" stop-color="#F7B82E"/><stop offset="1" stop-color="#EE7418"/></linearGradient><mask id="mm"><rect x="-10" y="-10" width="62" height="58" fill="#fff"/><circle cx="8.1" cy="-18.5" r="40.6" fill="#000"/></mask></defs><circle cx="21.3" cy="16.9" r="17.1" fill="url(#mg)" mask="url(#mm)"/></svg>
<div style="position:absolute;left:45px;top:1537px;width:24px;height:24px;border-radius:12px;background:#C42B1C;color:#fff;font-family:&quot;Liberation Sans&quot;;font-size:16px;line-height:24px;text-align:center">3</div>
<div class="t" style="left:76px;top:1532px;font-family:&quot;Liberation Sans&quot;, sans-serif;font-size:17px;color:#1F1F1F;font-weight:400;">22°C</div>
<div class="t" style="left:76px;top:1556px;font-family:&quot;Liberation Sans&quot;, sans-serif;font-size:17px;color:#3F3F3F;font-weight:400;">晴朗</div>
<svg style="position:absolute;left:765px;top:1547px;" width="35" height="35" viewBox="0 0 35 35" fill="none"><defs><linearGradient id="wg" x1="0" y1="0" x2="1" y2="1"><stop offset="0" stop-color="#4CC9FA"/><stop offset="1" stop-color="#0B6FD6"/></linearGradient></defs><rect x="0" y="0" width="16.5" height="16.5" rx="1.5" fill="url(#wg)"/><rect x="18.5" y="0" width="16.5" height="16.5" rx="1.5" fill="url(#wg)"/><rect x="0" y="18.5" width="16.5" height="16.5" rx="1.5" fill="url(#wg)"/><rect x="18.5" y="18.5" width="16.5" height="16.5" rx="1.5" fill="url(#wg)"/></svg>
<div style="position:absolute;left:821px;top:1541px;width:326px;height:46px;background:#F6F1F3;border:1.5px solid #CDC3C8;border-radius:23px;box-sizing:border-box;"></div>
<svg style="position:absolute;left:838px;top:1553px;" width="22" height="23" viewBox="0 0 22 23" fill="none"><circle cx="9" cy="9" r="7.5" stroke="#1B1B1B" stroke-width="2.4"/><path d="M14.5 14.5 L21 21" stroke="#1B1B1B" stroke-width="2.6" stroke-linecap="round"/></svg>
<div class="t" style="left:875px;top:1544px;font-family:&quot;Liberation Sans&quot;, sans-serif;font-size:20px;color:#5C5C5C;font-weight:400;">搜索</div>
<svg style="position:absolute;left:1070px;top:1543px;" width="72" height="42" viewBox="0 0 72 42" fill="none"><path d="M31 2 C29 12 28 20 25 28 M39 2 C42 10 46 17 49 22" stroke="#404040" stroke-width="3"/><ellipse cx="17" cy="31" rx="13" ry="8" fill="#9C9C9C"/><path d="M8 35 C14 40 24 38 28 33" stroke="#6E6E6E" stroke-width="3"/><ellipse cx="56" cy="30" rx="10" ry="8" fill="#A5A5A5" transform="rotate(-25 56 30)"/><path d="M48 38 C54 40 62 36 64 30" stroke="#707070" stroke-width="3"/></svg>
<div style="position:absolute;left:1176px;top:1547px;width:27px;height:23px;background:linear-gradient(135deg,#FFFFFF,#E6E6E6);border:1px solid #D6D6D6;border-radius:2px;"></div>
<div style="position:absolute;left:1167px;top:1556px;width:27px;height:24px;background:#1E1E1E;border-radius:2px;"></div>
<div style="position:absolute;left:1176px;top:1556px;width:18px;height:14px;background:#BDBDBD;opacity:.95;"></div>
<svg style="position:absolute;left:1232px;top:1547px;" width="37" height="34" viewBox="0 0 37 34" fill="none"><path d="M1 3 C1 1.5 2 1 3 1 H13 L16 4 H34 C35.5 4 36 5 36 6 V31 C36 32 35 33 34 33 H3 C2 33 1 32 1 31 Z" fill="#F9C440"/><path d="M1 8 H36 V31 C36 32 35 33 34 33 H3 C2 33 1 32 1 31 Z" fill="#FFD75E"/><rect x="8" y="21" width="21" height="12" rx="2.5" fill="#1A73C9"/><rect x="12" y="25" width="13" height="2" fill="#0C4A8A"/></svg>
<svg style="position:absolute;left:1298px;top:1547px;" width="37" height="37" viewBox="0 0 37 37" fill="none"><defs><linearGradient id="eg1" x1="0" y1="1" x2="1" y2="0"><stop offset="0" stop-color="#0C59A4"/><stop offset="1" stop-color="#1B9DE2"/></linearGradient><linearGradient id="eg2" x1="0" y1="0" x2="1" y2="1"><stop offset="0" stop-color="#35C1F1"/><stop offset="1" stop-color="#66EB6E"/></linearGradient></defs><circle cx="18.5" cy="18.5" r="18" fill="url(#eg1)"/><path d="M1 17 C3 5 12 0.5 19 0.5 C30 0.5 37 9 37 18 C37 24 33 27 28 27 C22 27 20 24 22 21 C24 17 19 12 13 13 C7 14 3 18 1 23 Z" fill="url(#eg2)"/><circle cx="21" cy="21" r="6" fill="#1E3F70" opacity=".35"/></svg>
<svg style="position:absolute;left:1364px;top:1552px;" width="38" height="26" viewBox="0 0 38 26" fill="none"><defs><linearGradient id="wpg" x1="0" y1="0" x2="0" y2="1"><stop offset="0" stop-color="#F51F2A"/><stop offset="1" stop-color="#FF4D10"/></linearGradient><linearGradient id="wpo" x1="0" y1="0" x2="0" y2="1"><stop offset="0" stop-color="#FF9A1F"/><stop offset="1" stop-color="#FF5A12"/></linearGradient></defs><path d="M3.8 3.6 H16.4 L12.8 20.6 Z" stroke="url(#wpg)" stroke-width="4.6" stroke-linejoin="round" fill="none"/><path d="M22.6 3.6 H34.4 L25.2 20.6 Z" stroke="url(#wpg)" stroke-width="4.6" stroke-linejoin="round" fill="none"/><path d="M20.5 1.2 H26 L21.5 17.5 L17.8 13 Z" fill="url(#wpo)"/></svg>
<svg style="position:absolute;left:1431px;top:1546px;" width="36" height="36" viewBox="0 0 36 36" fill="none"><rect x="0" y="0" width="36" height="36" rx="7" fill="#FFFFFF"/><path d="M18 3.5 C12.5 3.5 9.6 8 9.6 13 L9.2 16 C7 19 5.6 23 5.6 26 C6.6 26 8 25 8.6 24 C9.6 29 13 32 18 32 C23 32 26.4 29 27.4 24 C28 25 29.4 26 30.4 26 C30.4 23 29 19 26.8 16 L26.4 13 C26.4 8 23.5 3.5 18 3.5 Z" fill="#0A0A0A"/><ellipse cx="18" cy="24.5" rx="7.6" ry="7" fill="#fff"/><path d="M7.6 16.4 C14 18.6 22 18.6 28.4 16 L28 19.2 C22 20.6 14 20.6 8 19.6 Z" fill="#E8232C"/><rect x="12.4" y="19" width="3.6" height="4.6" fill="#E8232C"/><ellipse cx="18" cy="13.4" rx="5" ry="1.8" fill="#F5B000"/><ellipse cx="15.6" cy="9" rx="1.5" ry="2.1" fill="#fff"/><ellipse cx="20.4" cy="9" rx="1.5" ry="2.1" fill="#fff"/><circle cx="16" cy="9.2" r=".8" fill="#000"/><circle cx="20" cy="9.2" r=".8" fill="#000"/><ellipse cx="13" cy="31.6" rx="4.2" ry="1.3" fill="#F5B000"/><ellipse cx="23" cy="31.6" rx="4.2" ry="1.3" fill="#F5B000"/></svg>
<svg style="position:absolute;left:1497px;top:1547px;" width="36" height="35" viewBox="0 0 36 35" fill="none"><defs><linearGradient id="sg" x1="0" y1="0" x2="0" y2="1"><stop offset="0" stop-color="#111D2E"/><stop offset="1" stop-color="#1D5C93"/></linearGradient></defs><circle cx="18" cy="17.5" r="17" fill="url(#sg)"/><circle cx="23" cy="13" r="6" stroke="#fff" stroke-width="2.4"/><circle cx="23" cy="13" r="3.2" fill="#fff"/><path d="M1 21 L12 25" stroke="#fff" stroke-width="4"/><circle cx="13" cy="25" r="4" stroke="#fff" stroke-width="2"/><path d="M17 21 L21 17" stroke="#fff" stroke-width="3"/></svg>
<svg style="position:absolute;left:1563px;top:1546px;" width="36" height="36" viewBox="0 0 36 36" fill="none"><rect x="0" y="0" width="36" height="36" rx="7" fill="#161D47"/><circle cx="18" cy="18" r="10.5" stroke="#33D3C4" stroke-width="3"/><circle cx="18" cy="18" r="5.5" stroke="#33D3C4" stroke-width="2.4"/><path d="M15 6 H21 M16 30 L18 33 L20 30" stroke="#161D47" stroke-width="3"/><path d="M18 30 V33" stroke="#33D3C4" stroke-width="2"/></svg>
<svg style="position:absolute;left:1629px;top:1546px;" width="36" height="36" viewBox="0 0 36 36" fill="none"><rect x="0" y="0" width="36" height="36" rx="7" fill="#F7000B"/><path d="M20 7 C15 7 11 9 10 14 M12 13 C7 16 7 24 12 27 C17 31 25 29 27 23 C29 17 24 13 19 14 C15 15 14 20 17 22 C20 24 23 21 22 18 L19 9 C20 7 22 6 24 8" stroke="#fff" stroke-width="2.6" fill="none"/></svg>
<svg style="position:absolute;left:1695px;top:1546px;" width="36" height="36" viewBox="0 0 36 36" fill="none"><defs><linearGradient id="wcg" x1="0" y1="0" x2="0" y2="1"><stop offset="0" stop-color="#08D868"/><stop offset="1" stop-color="#06C15E"/></linearGradient></defs><rect x="0" y="0" width="36" height="36" rx="7" fill="url(#wcg)"/><ellipse cx="14" cy="15" rx="10" ry="8" fill="#fff"/><path d="M7 20 L6 24 L11 22 Z" fill="#fff"/><ellipse cx="23" cy="21" rx="9" ry="7" fill="#fff" stroke="#07C160" stroke-width="1.5"/><path d="M28 26 L30 29 L25 27 Z" fill="#fff"/><circle cx="11" cy="13" r="1.3" fill="#07C160"/><circle cx="17" cy="13" r="1.3" fill="#07C160"/><circle cx="20" cy="20" r="1.1" fill="#07C160"/><circle cx="26" cy="20" r="1.1" fill="#07C160"/></svg>
<div style="position:absolute;left:1751px;top:1536px;width:56px;height:57px;background:#F3EBEC;border-radius:5px;box-shadow:0 0 0 1px #E2D8DA;"></div>
<svg style="position:absolute;left:1761px;top:1546px;" width="36" height="35" viewBox="-2 0 36 35" fill="none"><defs><linearGradient id="clb1761" x1="0" y1="0" x2="1" y2="0"><stop offset=".55" stop-color="#0A9AE3"/><stop offset=".75" stop-color="#FF318C"/></linearGradient></defs><path d="M-1.2 3.4 C-1.2 2.6 -0.6 2.2 0.2 2.1 L19 0.6 L2.2 21.8 C0.5 19.5 -1.2 17 -1.2 14 Z" fill="url(#clb1761)"/><path d="M14 0.8 L28.2 0.6 C29.8 0.6 30.8 1.6 30.8 3.2 V9.7 L27.4 13.5 L10 10 Z" fill="#FF318C"/><path d="M27.8 11.6 H31.2 C32.6 11.6 33.7 12.8 33.7 14.2 V31.8 C33.7 33.2 32.6 34.3 31.2 34.3 H12.4 C11 34.3 10.2 33.2 10.6 32 L14 27 Z" fill="#21D789"/><path d="M2.2 21.6 L8 16 L14 28.8 L10.4 32.6 H3.6 C2.2 32.6 1.3 31.7 1.3 30.3 V23.5 Z" fill="#FF318C"/><rect x="4.9" y="7" width="22" height="21.8" fill="#000"/><text x="6.6" y="18.3" font-family="Liberation Sans" font-weight="700" font-size="11.6" fill="#fff" letter-spacing="-0.3">CL</text><rect x="7.7" y="24.3" width="8.3" height="2" fill="#fff"/></svg>
<div style="position:absolute;left:1767px;top:1588px;width:23px;height:4px;background:#0F9E8E;border-radius:2px;"></div>
<div style="position:absolute;left:1246px;top:1588px;width:10px;height:4px;background:#7D7779;border-radius:2px;"></div>
<div style="position:absolute;left:1312px;top:1588px;width:10px;height:4px;background:#7D7779;border-radius:2px;"></div>
<div style="position:absolute;left:1378px;top:1588px;width:10px;height:4px;background:#7D7779;border-radius:2px;"></div>
<div style="position:absolute;left:1445px;top:1588px;width:10px;height:4px;background:#7D7779;border-radius:2px;"></div>
<div style="position:absolute;left:1510px;top:1588px;width:10px;height:4px;background:#7D7779;border-radius:2px;"></div>
<div style="position:absolute;left:1576px;top:1588px;width:10px;height:4px;background:#7D7779;border-radius:2px;"></div>
<div style="position:absolute;left:1642px;top:1588px;width:10px;height:4px;background:#7D7779;border-radius:2px;"></div>
<div style="position:absolute;left:1708px;top:1588px;width:10px;height:4px;background:#7D7779;border-radius:2px;"></div>
<svg style="position:absolute;left:2077px;top:1559px;" width="15" height="9" viewBox="0 0 15 9" fill="none"><path d="M1 8 L7.5 1.5 L14 8" stroke="#1B1B1B" stroke-width="1.8"/></svg>
<svg style="position:absolute;left:2119px;top:1550px;" width="28" height="28" viewBox="0 0 28 28" fill="none"><path d="M4 12 A10 10 0 0 1 22 7 M24 16 A10 10 0 0 1 6 21" stroke="#333" stroke-width="1.8"/><path d="M22 2 V7 H17 M6 26 V21 H11" stroke="#333" stroke-width="1.8"/><circle cx="21" cy="21" r="5" fill="#1D6FE0"/></svg>
<div class="t" style="left:2170px;top:1544px;font-family:&quot;Liberation Sans&quot;, sans-serif;font-size:22px;color:#1B1B1B;font-weight:400;">中</div>
<svg style="position:absolute;left:2225px;top:1551px;" width="26" height="26" viewBox="0 0 26 26" fill="none"><circle cx="13" cy="13" r="12.5" fill="#18B85F"/><path d="M9 20 L12 6 H17 C20 6 21 9 19 11 C18 13 15 13 13 13 M6 14 H15" stroke="#fff" stroke-width="2.6" fill="none"/></svg>
<svg style="position:absolute;left:2283px;top:1553px;" width="24" height="20" viewBox="0 0 24 20" fill="none"><path d="M1 7 C7 1 17 1 23 7 M5 11 C9 7 15 7 19 11 M9 15 C11 13 13 13 15 15" stroke="#1B1B1B" stroke-width="1.8" fill="none"/><circle cx="12" cy="18" r="1.8" fill="#1B1B1B"/></svg>
<svg style="position:absolute;left:2317px;top:1552px;" width="26" height="22" viewBox="0 0 26 22" fill="none"><path d="M2 8 H6 L12 3 V19 L6 14 H2 Z" stroke="#1B1B1B" stroke-width="1.7" stroke-linejoin="round"/><path d="M16 7 C18 9 18 13 16 15" stroke="#1B1B1B" stroke-width="1.7"/><path d="M20 4 C24 8 24 14 20 18" stroke="#9A9A9A" stroke-width="1.5"/></svg>
<svg style="position:absolute;left:2354px;top:1551px;" width="28" height="24" viewBox="0 0 28 24" fill="none"><rect x="2" y="8" width="22" height="13" rx="2" stroke="#1B1B1B" stroke-width="1.8"/><rect x="24" y="12" width="3" height="5" fill="#1B1B1B"/><path d="M10 3 L5 10 H12 L8 17" stroke="#1B1B1B" stroke-width="1.8" fill="#E9DCDD"/><rect x="13" y="11" width="8" height="7" fill="#1B1B1B"/></svg>
<div class="t" style="left:2454px;top:1532px;font-family:&quot;Liberation Sans&quot;, sans-serif;font-size:18px;color:#1B1B1B;font-weight:400;">12:54</div>
<div class="t" style="left:2404px;top:1556px;font-family:&quot;Liberation Sans&quot;, sans-serif;font-size:18px;color:#1B1B1B;font-weight:400;">2025/11/18</div>
<svg style="position:absolute;left:2507px;top:1551px;" width="26" height="28" viewBox="0 0 26 28" fill="none"><path d="M2.5 19.5 C4.5 17.5 4.5 15 4.5 11.5 C4.5 7 7.5 4 11.5 4 C15.5 4 18.5 7 18.5 11.5 C18.5 15 18.5 17.5 20.5 19.5 Z" fill="#1B1B1B" stroke="#1B1B1B" stroke-width="1.5" stroke-linejoin="round"/><path d="M8.5 22 A3 3 0 0 0 14.5 22" stroke="#1B1B1B" stroke-width="2"/><path d="M8 10.5 H14 L8 16.5 H14" stroke="#F2E8E9" stroke-width="1.8" fill="none"/><path d="M17 1.5 H23 L17 7.5 H23" stroke="#1B1B1B" stroke-width="1.8" fill="none"/></svg>
<div style="position:absolute;left:2135px;top:1424px;width:425px;height:104px;background:linear-gradient(180deg,#1D2230 0%,#151A24 60%,#0D1119 100%);"></div>
<svg style="position:absolute;left:2135px;top:1424px;" width="425" height="104" viewBox="0 0 425 104" fill="none"><path d="M180 0 H380 L340 50 C320 80 300 100 260 104 H170 C140 100 130 70 150 40 Z" fill="#FFFFFF" opacity=".025"/><circle cx="410" cy="35" r="32" stroke="#FFFFFF" stroke-opacity=".035" stroke-width="9"/></svg>
<svg style="position:absolute;left:2150px;top:1444px;" width="65" height="66" viewBox="0 0 65 66" fill="none"><defs><linearGradient id="abg" x1="0" y1="0" x2="1" y2="0"><stop offset="0" stop-color="#5E4E48"/><stop offset="1" stop-color="#2A2326"/></linearGradient><linearGradient id="hair" x1="0" y1="0" x2="1" y2="0"><stop offset="0" stop-color="#6A504A"/><stop offset=".5" stop-color="#4E3834"/><stop offset="1" stop-color="#3A2A28"/></linearGradient></defs>
<rect width="65" height="66" fill="url(#abg)"/>
<path d="M1 66 C-1 36 6 6 33 3 C56 3 66 22 64 66 Z" fill="url(#hair)"/>
<path d="M6 58 C4 34 10 10 26 5 C15 16 11 34 11 58 Z" fill="#A88478" opacity=".55"/>
<path d="M15 46 C17 38 27 36 36 36 C47 36 55 39 55 46 C55 58 47 66 35 66 C24 66 15 58 15 46 Z" fill="#EBC8BC"/>
<path d="M12 50 C12 30 18 14 34 12 C50 12 58 26 57 46 L52 37 L46 40 L41 29 L38 39 L27 40 L25 33 L20 44 Z" fill="#523A36"/>
<ellipse cx="26" cy="53" rx="7" ry="4" fill="#E48C84" opacity=".45"/><ellipse cx="46" cy="50" rx="7" ry="4" fill="#E48C84" opacity=".45"/>
<ellipse cx="22" cy="46" rx="3.5" ry="2.6" fill="#C8386A"/><ellipse cx="47" cy="42" rx="3.8" ry="2.6" fill="#C8386A"/>
<path d="M55 34 C61 42 63 56 61 66 L53 66 C56 54 55 44 52 38 Z" fill="#3A2A28"/>
<path d="M30 66 H50 L48 63 H32 Z" fill="#D8D8E0" opacity=".8"/></svg>
<div style="position:absolute;left:2216px;top:1444px;width:5px;height:66px;background:#59BF40;"></div>
<div class="t" style="left:2238px;top:1434px;font-family:&quot;Liberation Sans&quot;, sans-serif;font-size:19px;color:#D8F0A8;font-weight:400;">昨天不早起</div>
<div class="t" style="left:2238px;top:1458px;font-family:&quot;Liberation Sans&quot;, sans-serif;font-size:17px;color:#9C9C9C;font-weight:400;">正在玩</div>
<div class="t" style="left:2238px;top:1481px;font-family:&quot;Liberation Sans&quot;, sans-serif;font-size:17px;color:#8FC24F;font-weight:700;">OBS Studio</div>
</body></html>
